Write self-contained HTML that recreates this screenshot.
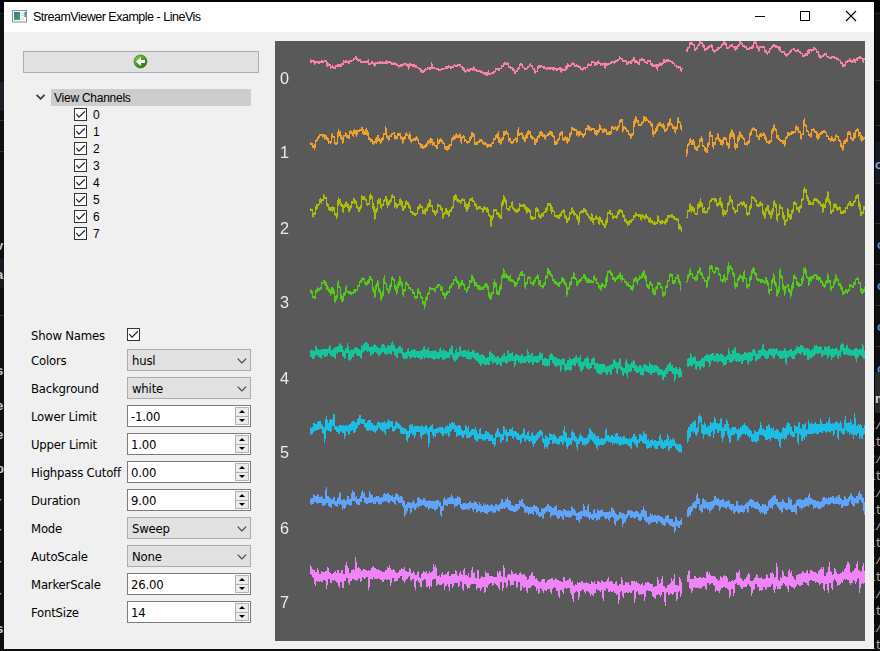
<!DOCTYPE html>
<html>
<head>
<meta charset="utf-8">
<title>StreamViewer Example - LineVis</title>
<style>
html,body{margin:0;padding:0;}
body{width:880px;height:651px;overflow:hidden;background:#0d0f12;position:relative;font-family:"DejaVu Sans Condensed","DejaVu Sans","Liberation Sans",sans-serif;font-size:13px;letter-spacing:-0.2px;color:#000;}
.abs{position:absolute;}
#desk div{position:absolute;}
.frag{font-family:"Liberation Sans",sans-serif;font-size:13px;line-height:16px;color:#c8ccd0;white-space:nowrap;font-weight:bold;}
.mono{font-family:"Liberation Mono",monospace;font-weight:normal;color:#a8a8a8;font-size:13px;}
#win{position:absolute;left:4px;top:2px;width:870px;height:647px;background:#f0f0f0;}
#title{position:absolute;left:0;top:0;width:870px;height:30px;background:#fff;}
#title .txt{position:absolute;left:29px;top:7px;font-family:"Liberation Sans","DejaVu Sans",sans-serif;font-size:12.5px;letter-spacing:-0.49px;line-height:16px;white-space:nowrap;color:#000;}
.lbl{position:absolute;left:27px;white-space:nowrap;line-height:16px;height:16px;}
.combo{position:absolute;left:123px;width:122px;height:20px;background:#e1e1e1;border:1px solid #adadad;}
.combo span{position:absolute;left:4px;top:3px;line-height:16px;white-space:nowrap;}
.combo svg{position:absolute;left:109px;top:8px;}
.spin{position:absolute;left:123px;width:122px;height:20px;background:#fff;border:1px solid #7a7a7a;}
.spin span{position:absolute;left:3px;top:3px;line-height:16px;white-space:nowrap;}
.spin .up,.spin .dn{position:absolute;left:107px;width:12px;height:8px;background:#ececec;border:1px solid #b2b2b2;}
.spin .up{top:1px;} .spin .dn{top:10px;height:7px;}
.tri-up{position:absolute;left:2.5px;top:2px;width:0;height:0;border-left:3px solid transparent;border-right:3px solid transparent;border-bottom:3px solid #000;}
.tri-dn{position:absolute;left:2.5px;top:2px;width:0;height:0;border-left:3px solid transparent;border-right:3px solid transparent;border-top:3px solid #000;}
.cb{position:absolute;width:11px;height:11px;border:1px solid #333;background:#fff;}
.cb svg{position:absolute;left:0;top:0;}
.item{position:absolute;left:89px;white-space:nowrap;line-height:16px;font-family:"Liberation Sans",sans-serif;font-size:12px;letter-spacing:-0.25px;}
#plot{position:absolute;left:271px;top:39px;width:590px;height:600px;background:#595959;overflow:hidden;}
.ch{position:absolute;left:4.5px;font-family:"Liberation Sans",sans-serif;font-size:16.2px;color:#ececec;line-height:18px;opacity:0.999;will-change:transform;}
</style>
</head>
<body>
<div id="desk">
<div style="left:0;top:0;width:880px;height:12px;background:#020408"></div>
<div style="left:0;top:13px;width:880px;height:1px;background:#1f242b"></div>
<div style="left:0;top:82px;width:4px;height:29px;background:#1b2027"></div>
<div style="left:0;top:120px;width:4px;height:1px;background:#2a3038"></div>
<div style="left:0;top:151px;width:4px;height:1px;background:#2a3038"></div>
<div style="left:0;top:315px;width:4px;height:1px;background:#2a3038"></div>
<div style="left:0;top:259px;width:4px;height:29px;background:#161b22"></div>
<div class="frag" style="left:-4px;top:238px">v</div>
<div class="frag" style="left:-4px;top:267px">a</div>
<div class="frag" style="left:-4px;top:331px">l</div>
<div class="frag" style="left:-4px;top:363px">s</div>
<div class="frag" style="left:-4px;top:398px">e</div>
<div class="frag" style="left:-4px;top:427px">e</div>
<div class="frag" style="left:-4px;top:461px">p</div>
<div class="frag" style="left:-4px;top:494px">r</div>
<div class="frag" style="left:-4px;top:524px">r</div>
<div class="frag" style="left:-4px;top:556px">r</div>
<div class="frag" style="left:-4px;top:588px">r</div>
<div class="frag" style="left:-4px;top:621px">s</div>
<div style="left:874px;top:0;width:1px;height:651px;background:#000"></div>
<div style="left:875px;top:80px;width:5px;height:1px;background:#2a3038"></div>
<div style="left:875px;top:125px;width:5px;height:1px;background:#2a3038"></div>
<div style="left:875px;top:183px;width:5px;height:1px;background:#2a3038"></div>
<div style="left:875px;top:223px;width:5px;height:1px;background:#2a3038"></div>
<div style="left:875px;top:264px;width:5px;height:1px;background:#2a3038"></div>
<div style="left:875px;top:305px;width:5px;height:1px;background:#2a3038"></div>
<div style="left:875px;top:346px;width:5px;height:1px;background:#2a3038"></div>
<div style="left:875px;top:142px;width:5px;height:41px;background:#161b22"></div>
<div class="frag" style="left:875px;top:157px;color:#8aa4c8">or</div>
<div class="frag" style="left:877px;top:237px;color:#5b8bd0">o</div>
<div class="frag" style="left:877px;top:278px;color:#5b8bd0">o</div>
<div class="frag" style="left:877px;top:319px;color:#5b8bd0">o</div>
<div class="frag" style="left:877px;top:361px;color:#5b8bd0">o</div>
<div style="left:875px;top:372px;width:5px;height:41px;background:#2b2b2b"></div>
<div class="frag" style="left:875px;top:391px;color:#ddd">m</div>
<div style="left:875px;top:413px;width:5px;height:238px;background:#0c0c0c"></div>
<div class="frag mono" style="left:867.5px;top:418.0px">2/</div>
<div class="frag mono" style="left:867.5px;top:434.9px">at</div>
<div class="frag mono" style="left:867.5px;top:451.8px">2/</div>
<div class="frag mono" style="left:867.5px;top:468.7px">at</div>
<div class="frag mono" style="left:867.5px;top:485.6px">2/</div>
<div class="frag mono" style="left:867.5px;top:502.5px">at</div>
<div class="frag mono" style="left:867.5px;top:519.4px">2/</div>
<div class="frag mono" style="left:867.5px;top:536.3px">at</div>
<div class="frag mono" style="left:867.5px;top:553.2px">2/</div>
<div class="frag mono" style="left:867.5px;top:570.1px">at</div>
<div class="frag mono" style="left:867.5px;top:587.0px">2/</div>
<div class="frag mono" style="left:867.5px;top:603.9px">at</div>
<div class="frag mono" style="left:867.5px;top:620.8px">2/</div>
<div class="frag mono" style="left:867.5px;top:637.7px">at</div>
<div style="left:0;top:650px;width:880px;height:1px;background:#0a0a0a"></div>
</div>
<div id="win">
 <div id="title">
  <svg class="abs" style="left:8px;top:8px" width="16" height="13" viewBox="0 0 16 13">
   <defs><linearGradient id="g1" x1="0" y1="0" x2="0.3" y2="1"><stop offset="0" stop-color="#3b74a8"/><stop offset="1" stop-color="#46a35c"/></linearGradient></defs>
   <rect x="0.5" y="0.5" width="14" height="11.5" fill="#fafafa" stroke="#8a90a0"/>
   <rect x="2" y="2" width="6" height="8" fill="url(#g1)"/>
   <rect x="12.4" y="2" width="1.6" height="5" fill="url(#g1)"/>
   <rect x="9" y="3" width="3" height="1" fill="#d8d8d8"/><rect x="9" y="5" width="3" height="1" fill="#d8d8d8"/><rect x="9" y="7.5" width="3" height="1" fill="#d8d8d8"/><rect x="9" y="9" width="3" height="1" fill="#e2e2e2"/>
  </svg>
  <div class="txt">StreamViewer Example - LineVis</div>
  <svg class="abs" style="left:745px;top:5px" width="120" height="20" viewBox="0 0 120 20" shape-rendering="crispEdges">
   <rect x="6" y="9" width="10" height="1" fill="#000"/>
   <rect x="51.5" y="4.5" width="9" height="9" fill="none" stroke="#000" stroke-width="1"/>
   <g shape-rendering="auto"><path d="M97 4 L107 14 M107 4 L97 14" stroke="#000" stroke-width="1.1" fill="none"/></g>
  </svg>
 </div>

 <!-- back button -->
 <div class="abs" style="left:19px;top:49px;width:234px;height:20px;background:#e1e1e1;border:1px solid #adadad;">
  <svg class="abs" style="left:109px;top:2px" width="15" height="15" viewBox="0 0 15 15">
   <defs><linearGradient id="g2" x1="0.15" y1="0.1" x2="0.8" y2="0.95"><stop offset="0" stop-color="#7cc648"/><stop offset="0.5" stop-color="#4a9a26"/><stop offset="1" stop-color="#2c7610"/></linearGradient></defs>
   <circle cx="7.5" cy="7.5" r="6.5" fill="url(#g2)" stroke="#2f7a18" stroke-width="0.7"/>
   <path d="M2.8 7.5 L7.9 2.9 L7.9 6.1 L12 6.1 L12 8.9 L7.9 8.9 L7.9 12.1 Z" fill="#fff"/>
  </svg>
 </div>

 <!-- tree -->
 <svg class="abs" style="left:32px;top:92px" width="10" height="7" viewBox="0 0 10 7"><path d="M0.6 0.8 L4.6 4.8 L8.6 0.8" fill="none" stroke="#383838" stroke-width="1.8"/></svg>
 <div class="abs" style="left:47px;top:87px;width:200px;height:17px;background:#cdcdcd;"></div>
 <div class="abs item" style="left:50px;top:88px;">View Channels</div>
 <div class="cb" style="left:70px;top:106px"><svg width="11" height="11" viewBox="0 0 11 11"><path d="M1.6 5.4 L4 8.1 L9.5 2.7" fill="none" stroke="#222" stroke-width="1.2" stroke-linecap="round"/></svg></div><div class="item" style="top:105px">0</div>
 <div class="cb" style="left:70px;top:123px"><svg width="11" height="11" viewBox="0 0 11 11"><path d="M1.6 5.4 L4 8.1 L9.5 2.7" fill="none" stroke="#222" stroke-width="1.2" stroke-linecap="round"/></svg></div><div class="item" style="top:122px">1</div>
 <div class="cb" style="left:70px;top:140px"><svg width="11" height="11" viewBox="0 0 11 11"><path d="M1.6 5.4 L4 8.1 L9.5 2.7" fill="none" stroke="#222" stroke-width="1.2" stroke-linecap="round"/></svg></div><div class="item" style="top:139px">2</div>
 <div class="cb" style="left:70px;top:157px"><svg width="11" height="11" viewBox="0 0 11 11"><path d="M1.6 5.4 L4 8.1 L9.5 2.7" fill="none" stroke="#222" stroke-width="1.2" stroke-linecap="round"/></svg></div><div class="item" style="top:156px">3</div>
 <div class="cb" style="left:70px;top:174px"><svg width="11" height="11" viewBox="0 0 11 11"><path d="M1.6 5.4 L4 8.1 L9.5 2.7" fill="none" stroke="#222" stroke-width="1.2" stroke-linecap="round"/></svg></div><div class="item" style="top:173px">4</div>
 <div class="cb" style="left:70px;top:191px"><svg width="11" height="11" viewBox="0 0 11 11"><path d="M1.6 5.4 L4 8.1 L9.5 2.7" fill="none" stroke="#222" stroke-width="1.2" stroke-linecap="round"/></svg></div><div class="item" style="top:190px">5</div>
 <div class="cb" style="left:70px;top:208px"><svg width="11" height="11" viewBox="0 0 11 11"><path d="M1.6 5.4 L4 8.1 L9.5 2.7" fill="none" stroke="#222" stroke-width="1.2" stroke-linecap="round"/></svg></div><div class="item" style="top:207px">6</div>
 <div class="cb" style="left:70px;top:225px"><svg width="11" height="11" viewBox="0 0 11 11"><path d="M1.6 5.4 L4 8.1 L9.5 2.7" fill="none" stroke="#222" stroke-width="1.2" stroke-linecap="round"/></svg></div><div class="item" style="top:224px">7</div>

 <!-- form -->
 <div class="lbl" style="top:326px">Show Names</div>
 <div class="cb" style="left:123px;top:326px"><svg width="11" height="11" viewBox="0 0 11 11"><path d="M1.6 5.4 L4 8.1 L9.5 2.7" fill="none" stroke="#222" stroke-width="1.2" stroke-linecap="round"/></svg></div>
 <div class="lbl" style="top:351px">Colors</div>
 <div class="combo" style="top:347px"><span>husl</span><svg width="10" height="6" viewBox="0 0 10 6"><path d="M0.7 0.7 L4.9 4.9 L9.1 0.7" fill="none" stroke="#404040" stroke-width="1.15"/></svg></div>
 <div class="lbl" style="top:379px">Background</div>
 <div class="combo" style="top:375px"><span>white</span><svg width="10" height="6" viewBox="0 0 10 6"><path d="M0.7 0.7 L4.9 4.9 L9.1 0.7" fill="none" stroke="#404040" stroke-width="1.15"/></svg></div>
 <div class="lbl" style="top:407px">Lower Limit</div>
 <div class="spin" style="top:403px"><span>-1.00</span><div class="up"><div class="tri-up"></div></div><div class="dn"><div class="tri-dn"></div></div></div>
 <div class="lbl" style="top:435px">Upper Limit</div>
 <div class="spin" style="top:431px"><span>1.00</span><div class="up"><div class="tri-up"></div></div><div class="dn"><div class="tri-dn"></div></div></div>
 <div class="lbl" style="top:463px">Highpass Cutoff</div>
 <div class="spin" style="top:459px"><span>0.00</span><div class="up"><div class="tri-up"></div></div><div class="dn"><div class="tri-dn"></div></div></div>
 <div class="lbl" style="top:491px">Duration</div>
 <div class="spin" style="top:487px"><span>9.00</span><div class="up"><div class="tri-up"></div></div><div class="dn"><div class="tri-dn"></div></div></div>
 <div class="lbl" style="top:519px">Mode</div>
 <div class="combo" style="top:515px"><span>Sweep</span><svg width="10" height="6" viewBox="0 0 10 6"><path d="M0.7 0.7 L4.9 4.9 L9.1 0.7" fill="none" stroke="#404040" stroke-width="1.15"/></svg></div>
 <div class="lbl" style="top:547px">AutoScale</div>
 <div class="combo" style="top:543px"><span>None</span><svg width="10" height="6" viewBox="0 0 10 6"><path d="M0.7 0.7 L4.9 4.9 L9.1 0.7" fill="none" stroke="#404040" stroke-width="1.15"/></svg></div>
 <div class="lbl" style="top:575px">MarkerScale</div>
 <div class="spin" style="top:571px"><span>26.00</span><div class="up"><div class="tri-up"></div></div><div class="dn"><div class="tri-dn"></div></div></div>
 <div class="lbl" style="top:603px">FontSize</div>
 <div class="spin" style="top:599px"><span>14</span><div class="up"><div class="tri-up"></div></div><div class="dn"><div class="tri-dn"></div></div></div>

 <div id="plot">
<svg class="abs" style="left:0;top:0" width="590" height="600" viewBox="0 0 590 600" shape-rendering="crispEdges">
<polyline points="35.5,18.1 35.5,21.4 36.5,21.2 36.5,19.9 37.5,19.0 37.5,20.2 38.5,21.6 38.5,20.0 39.5,20.1 39.5,23.8 40.5,21.5 40.5,20.8 41.5,21.2 41.5,22.1 42.5,21.5 42.5,19.9 43.5,20.6 43.5,21.6 44.5,23.0 44.5,21.3 45.5,20.4 45.5,21.4 46.5,20.9 46.5,19.1 47.5,20.1 47.5,21.4 48.5,21.6 48.5,20.4 49.5,19.8 49.5,20.6 50.5,20.4 50.5,19.4 51.5,20.1 51.5,21.7 52.5,26.0 52.5,21.4 53.5,23.4 53.5,24.6 54.5,24.5 54.5,23.4 55.5,24.2 55.5,27.4 56.5,26.6 56.5,25.4 57.5,24.7 57.5,25.9 58.5,27.4 58.5,25.6 59.5,26.6 59.5,27.4 60.5,26.9 60.5,24.4 61.5,24.5 61.5,25.5 62.5,24.8 62.5,23.9 63.5,24.0 63.5,25.4 64.5,25.7 64.5,24.3 65.5,23.1 65.5,24.6 66.5,25.6 66.5,23.6 67.5,22.0 67.5,23.9 68.5,22.7 68.5,19.5 69.5,20.7 69.5,21.6 70.5,21.0 70.5,19.5 71.5,19.8 71.5,20.9 72.5,21.6 72.5,20.5 73.5,21.3 73.5,23.1 74.5,22.0 74.5,20.5 75.5,19.4 75.5,20.6 76.5,20.7 76.5,19.7 77.5,18.9 77.5,20.0 78.5,19.3 78.5,18.4 79.5,16.7 79.5,18.7 80.5,16.9 80.5,15.8 81.5,15.9 81.5,17.5 82.5,20.2 82.5,17.2 83.5,19.4 83.5,20.6 84.5,19.5 84.5,18.7 85.5,19.2 85.5,21.0 86.5,21.8 86.5,20.8 87.5,20.5 87.5,21.4 88.5,22.0 88.5,20.6 89.5,21.2 89.5,21.8 90.5,21.8 90.5,20.8 91.5,20.2 91.5,21.5 92.5,21.7 92.5,20.7 93.5,18.3 93.5,22.6 94.5,24.3 94.5,22.4 95.5,22.2 95.5,23.2 96.5,22.5 96.5,20.6 97.5,20.7 97.5,21.7 98.5,23.9 98.5,21.4 99.5,23.1 99.5,26.0 100.5,23.4 100.5,21.7 101.5,21.3 101.5,22.2 102.5,22.1 102.5,21.2 103.5,21.3 103.5,22.2 104.5,22.0 104.5,20.3 105.5,20.5 105.5,22.7 106.5,22.9 106.5,21.8 107.5,20.7 107.5,22.1 108.5,22.2 108.5,21.2 109.5,21.8 109.5,22.6 110.5,21.9 110.5,20.5 111.5,19.5 111.5,21.4 112.5,22.7 112.5,21.1 113.5,21.0 113.5,22.1 114.5,21.3 114.5,20.2 115.5,20.7 115.5,21.9 116.5,23.5 116.5,21.6 117.5,22.8 117.5,24.0 118.5,23.4 118.5,21.6 119.5,21.2 119.5,23.1 120.5,23.4 120.5,22.6 121.5,22.8 121.5,23.6 122.5,25.0 122.5,23.3 123.5,24.7 123.5,26.2 124.5,25.5 124.5,24.4 125.5,23.8 125.5,25.1 126.5,24.9 126.5,23.7 127.5,23.1 127.5,24.1 128.5,24.0 128.5,22.8 129.5,22.0 129.5,23.1 130.5,22.9 130.5,22.1 131.5,22.6 131.5,24.5 132.5,25.2 132.5,24.1 133.5,23.0 133.5,28.7 134.5,23.7 134.5,22.4 135.5,22.5 135.5,23.8 136.5,24.5 136.5,22.9 137.5,24.1 137.5,25.2 138.5,24.9 138.5,23.2 139.5,23.5 139.5,24.7 140.5,26.4 140.5,24.6 141.5,25.2 141.5,26.7 142.5,27.0 142.5,25.9 143.5,26.6 143.5,27.7 144.5,28.1 144.5,27.4 145.5,27.0 145.5,28.6 146.5,31.8 146.5,28.6 147.5,30.2 147.5,31.1 148.5,31.4 148.5,30.3 149.5,28.7 149.5,30.9 150.5,28.9 150.5,27.9 151.5,28.3 151.5,29.0 152.5,28.3 152.5,27.3 153.5,26.4 153.5,27.3 154.5,28.5 154.5,26.2 155.5,27.0 155.5,28.3 156.5,27.3 156.5,21.5 157.5,25.7 157.5,27.2 158.5,27.6 158.5,26.4 159.5,26.6 159.5,27.2 160.5,28.1 160.5,26.8 161.5,27.8 161.5,28.8 162.5,28.7 162.5,27.4 163.5,27.9 163.5,29.4 164.5,29.5 164.5,28.6 165.5,28.0 165.5,28.9 166.5,28.8 166.5,27.4 167.5,27.4 167.5,28.3 168.5,28.6 168.5,27.3 169.5,27.1 169.5,28.0 170.5,27.4 170.5,25.3 171.5,26.2 171.5,27.0 172.5,27.0 172.5,26.0 173.5,24.3 173.5,26.3 174.5,26.8 174.5,25.2 175.5,25.5 175.5,27.2 176.5,26.9 176.5,25.5 177.5,25.8 177.5,27.1 178.5,26.1 178.5,24.4 179.5,23.7 179.5,24.8 180.5,25.1 180.5,23.9 181.5,24.5 181.5,25.4 182.5,25.0 182.5,23.7 183.5,23.4 183.5,24.6 184.5,24.5 184.5,23.4 185.5,23.5 185.5,25.7 186.5,26.2 186.5,25.1 187.5,25.4 187.5,26.9 188.5,29.6 188.5,26.6 189.5,29.4 189.5,30.3 190.5,31.7 190.5,30.0 191.5,29.4 191.5,30.3 192.5,29.7 192.5,27.3 193.5,29.6 193.5,30.6 194.5,30.3 194.5,29.1 195.5,27.3 195.5,29.4 196.5,27.7 196.5,27.0 197.5,27.4 197.5,29.4 198.5,28.2 198.5,24.9 199.5,27.2 199.5,28.4 200.5,30.3 200.5,28.1 201.5,29.1 201.5,29.9 202.5,30.3 202.5,29.3 203.5,29.8 203.5,30.5 204.5,30.2 204.5,29.2 205.5,29.5 205.5,31.0 206.5,31.6 206.5,30.2 207.5,31.5 207.5,32.2 208.5,33.0 208.5,31.9 209.5,32.1 209.5,33.0 210.5,33.1 210.5,31.7 211.5,31.2 211.5,34.3 212.5,34.7 212.5,33.7 213.5,29.5 213.5,33.8 214.5,33.4 214.5,32.5 215.5,32.2 215.5,33.4 216.5,32.3 216.5,31.3 217.5,31.4 217.5,32.3 218.5,32.2 218.5,31.3 219.5,30.1 219.5,31.5 220.5,30.4 220.5,28.0 221.5,26.9 221.5,28.3 222.5,28.8 222.5,27.6 223.5,27.9 223.5,29.4 224.5,28.8 224.5,27.8 225.5,26.8 225.5,28.2 226.5,27.1 226.5,24.4 227.5,24.8 227.5,25.7 228.5,25.1 228.5,23.7 229.5,21.1 229.5,24.0 230.5,23.1 230.5,21.8 231.5,22.3 231.5,23.5 232.5,23.7 232.5,21.5 233.5,23.4 233.5,26.4 234.5,27.0 234.5,26.1 235.5,25.2 235.5,26.4 236.5,27.8 236.5,26.1 237.5,27.5 237.5,29.6 238.5,28.6 238.5,27.8 239.5,28.3 239.5,33.0 240.5,31.5 240.5,30.6 241.5,29.4 241.5,30.9 242.5,29.7 242.5,28.3 243.5,26.3 243.5,28.6 244.5,26.6 244.5,23.9 245.5,22.5 245.5,23.9 246.5,24.0 246.5,22.8 247.5,23.7 247.5,26.0 248.5,26.9 248.5,25.9 249.5,26.5 249.5,27.7 250.5,28.4 250.5,27.1 251.5,27.4 251.5,28.5 252.5,27.5 252.5,26.5 253.5,24.9 253.5,26.8 254.5,25.2 254.5,24.1 255.5,22.7 255.5,24.4 256.5,25.4 256.5,24.2 257.5,25.1 257.5,27.3 258.5,28.5 258.5,27.0 259.5,28.2 259.5,30.2 260.5,32.6 260.5,29.9 261.5,30.3 261.5,31.0 262.5,30.6 262.5,27.7 263.5,24.6 263.5,28.0 264.5,25.8 264.5,24.5 265.5,24.7 265.5,26.3 266.5,25.5 266.5,24.7 267.5,25.3 267.5,26.7 268.5,27.3 268.5,25.9 269.5,25.7 269.5,27.2 270.5,27.8 270.5,27.0 271.5,27.2 271.5,28.5 272.5,27.9 272.5,27.1 273.5,26.1 273.5,27.3 274.5,28.5 274.5,27.0 275.5,27.0 275.5,28.4 276.5,27.3 276.5,25.8 277.5,26.8 277.5,28.1 278.5,29.4 278.5,28.1 279.5,26.0 279.5,28.7 280.5,28.2 280.5,27.2 281.5,27.8 281.5,28.9 282.5,29.5 282.5,28.3 283.5,27.4 283.5,28.4 284.5,27.8 284.5,26.9 285.5,26.8 285.5,28.1 286.5,32.1 286.5,27.8 287.5,27.9 287.5,28.9 288.5,29.4 288.5,28.3 289.5,28.6 289.5,29.7 290.5,29.6 290.5,28.2 291.5,24.2 291.5,28.4 292.5,25.9 292.5,21.8 293.5,24.6 293.5,25.5 294.5,25.7 294.5,24.2 295.5,24.3 295.5,25.2 296.5,24.4 296.5,23.4 297.5,21.5 297.5,23.7 298.5,23.0 298.5,21.9 299.5,22.7 299.5,25.3 300.5,25.3 300.5,24.6 301.5,23.7 301.5,24.7 302.5,25.7 302.5,24.6 303.5,24.8 303.5,25.9 304.5,26.6 304.5,25.5 305.5,26.3 305.5,27.7 306.5,28.8 306.5,27.3 307.5,28.1 307.5,29.3 308.5,28.1 308.5,27.1 309.5,26.7 309.5,27.7 310.5,28.2 310.5,26.9 311.5,25.8 311.5,27.2 312.5,26.1 312.5,24.5 313.5,22.5 313.5,24.8 314.5,24.1 314.5,23.0 315.5,23.5 315.5,24.3 316.5,23.8 316.5,20.7 317.5,20.1 317.5,20.9 318.5,22.2 318.5,20.6 319.5,21.9 319.5,24.0 320.5,24.0 320.5,22.1 321.5,21.9 321.5,23.4 322.5,22.8 322.5,21.7 323.5,19.5 323.5,22.5 324.5,23.1 324.5,21.7 325.5,22.8 325.5,24.1 326.5,23.8 326.5,22.8 327.5,22.9 327.5,24.2 328.5,23.7 328.5,22.7 329.5,21.7 329.5,23.0 330.5,28.3 330.5,22.5 331.5,23.4 331.5,24.7 332.5,23.9 332.5,22.9 333.5,22.9 333.5,24.1 334.5,23.4 334.5,22.4 335.5,21.6 335.5,22.7 336.5,22.8 336.5,21.7 337.5,19.9 337.5,22.0 338.5,21.2 338.5,20.3 339.5,20.8 339.5,22.3 340.5,21.2 340.5,20.4 341.5,19.1 341.5,20.7 342.5,20.4 342.5,19.3 343.5,17.9 343.5,19.6 344.5,18.2 344.5,15.7 345.5,16.7 345.5,17.4 346.5,18.2 346.5,17.2 347.5,18.0 347.5,20.0 348.5,21.1 348.5,19.7 349.5,19.3 349.5,20.2 350.5,20.2 350.5,19.0 351.5,19.9 351.5,22.9 352.5,23.4 352.5,22.2 353.5,20.6 353.5,22.5 354.5,21.5 354.5,20.5 355.5,20.5 355.5,23.2 356.5,21.6 356.5,20.1 357.5,18.2 357.5,20.4 358.5,18.5 358.5,16.9 359.5,17.1 359.5,22.3 360.5,20.5 360.5,19.6 361.5,19.8 361.5,20.9 362.5,22.8 362.5,20.6 363.5,22.6 363.5,23.8 364.5,22.9 364.5,20.0 365.5,17.7 365.5,20.3 366.5,18.7 366.5,17.5 367.5,18.3 367.5,19.7 368.5,19.5 368.5,18.4 369.5,19.2 369.5,21.0 370.5,22.1 370.5,20.8 371.5,21.4 371.5,22.9 372.5,21.9 372.5,20.8 373.5,18.7 373.5,21.1 374.5,20.0 374.5,19.0 375.5,19.7 375.5,23.0 376.5,24.5 376.5,22.7 377.5,23.0 377.5,23.9 378.5,26.2 378.5,23.6 379.5,24.5 379.5,25.9 380.5,24.8 380.5,24.1 381.5,23.8 381.5,25.1 382.5,29.5 382.5,23.7 383.5,24.1 383.5,25.3 384.5,24.4 384.5,21.9 385.5,22.4 385.5,24.9 386.5,24.5 386.5,23.5 387.5,21.6 387.5,23.8 388.5,21.9 388.5,19.2 389.5,18.9 389.5,20.5 390.5,22.0 390.5,20.2 391.5,18.7 391.5,20.5 392.5,20.7 392.5,18.5 393.5,19.4 393.5,20.9 394.5,20.0 394.5,19.2 395.5,19.5 395.5,20.4 396.5,21.3 396.5,20.3 397.5,20.7 397.5,22.1 398.5,22.8 398.5,21.8 399.5,22.5 399.5,24.5 400.5,25.0 400.5,23.9 401.5,24.7 401.5,25.9 402.5,27.2 402.5,25.6 403.5,26.1 403.5,27.3 404.5,26.6 404.5,25.3 405.5,26.5 405.5,27.7 406.5,30.5 406.5,27.0 407.5,27.6 407.5,28.4" fill="none" stroke="#fb82a0" stroke-width="1.35" stroke-linejoin="bevel"/>
<polyline points="411.5,8.2 411.5,9.5 412.5,11.0 412.5,7.4 413.5,5.7 413.5,7.7 414.5,6.0 414.5,3.3 415.5,0.7 415.5,3.6 416.5,4.0 416.5,1.0 417.5,1.6 417.5,3.0 418.5,4.9 418.5,2.7 419.5,4.6 419.5,8.6 420.5,10.1 420.5,8.3 421.5,6.6 421.5,8.6 422.5,6.9 422.5,4.9 423.5,3.7 423.5,5.2 424.5,4.0 424.5,1.9 425.5,-0.2 425.5,2.2 426.5,2.0 426.5,1.0 427.5,1.7 427.5,3.9 428.5,6.7 428.5,3.6 429.5,6.4 429.5,8.9 430.5,10.1 430.5,8.5 431.5,7.3 431.5,8.8 432.5,7.6 432.5,6.1 433.5,5.9 433.5,7.4 434.5,6.2 434.5,4.4 435.5,4.5 435.5,5.5 436.5,6.4 436.5,3.0 437.5,6.1 437.5,8.3 438.5,10.7 438.5,8.0 439.5,10.1 439.5,11.1 440.5,10.6 440.5,9.2 441.5,9.0 441.5,9.9 442.5,9.3 442.5,7.7 443.5,5.9 443.5,8.0 444.5,7.7 444.5,6.3 445.5,6.0 445.5,7.2 446.5,6.3 446.5,4.1 447.5,2.6 447.5,4.4 448.5,2.9 448.5,1.1 449.5,0.4 449.5,1.8 450.5,4.6 450.5,1.5 451.5,4.3 451.5,7.2 452.5,8.1 452.5,7.0 453.5,6.3 453.5,7.4 454.5,6.5 454.5,5.6 455.5,4.2 455.5,5.9 456.5,4.5 456.5,3.2 457.5,4.2 457.5,5.3 458.5,6.4 458.5,4.9 459.5,6.3 459.5,7.5 460.5,9.6 460.5,7.2 461.5,4.9 461.5,8.4 462.5,5.9 462.5,5.0 463.5,3.5 463.5,5.3 464.5,3.8 464.5,1.0 465.5,0.4 465.5,1.3 466.5,3.5 466.5,1.0 467.5,3.4 467.5,5.2 468.5,5.7 468.5,4.3 469.5,4.9 469.5,5.7 470.5,7.0 470.5,4.7 471.5,6.7 471.5,8.3 472.5,9.2 472.5,7.6 473.5,7.7 473.5,9.1 474.5,8.0 474.5,6.7 475.5,6.8 475.5,7.8 476.5,7.5 476.5,5.8 477.5,4.3 477.5,8.0 478.5,4.6 478.5,2.5 479.5,-0.2 479.5,2.8 480.5,1.7 480.5,0.8 481.5,1.4 481.5,4.7 482.5,8.4 482.5,4.4 483.5,8.1 483.5,10.9 484.5,8.4 484.5,6.6 485.5,5.3 485.5,6.9 486.5,6.5 486.5,5.2 487.5,5.7 487.5,7.0 488.5,6.3 488.5,5.4 489.5,6.0 489.5,9.0 490.5,11.6 490.5,8.7 491.5,10.6 491.5,11.8 492.5,13.7 492.5,11.5 493.5,10.6 493.5,11.8 494.5,10.9 494.5,7.8 495.5,6.9 495.5,8.6 496.5,6.9 496.5,6.1 497.5,4.1 497.5,6.4 498.5,4.4 498.5,3.6 499.5,4.1 499.5,5.7 500.5,6.3 500.5,5.3 501.5,4.6 501.5,5.7 502.5,6.7 502.5,5.2 503.5,6.7 503.5,8.2 504.5,9.4 504.5,5.4 505.5,8.9 505.5,10.5 506.5,11.5 506.5,9.8 507.5,11.2 507.5,11.9 508.5,11.5 508.5,10.1 509.5,10.9 509.5,12.1 510.5,14.5 510.5,11.8 511.5,14.4 511.5,15.2 512.5,14.7 512.5,13.0 513.5,12.3 513.5,13.8 514.5,12.3 514.5,11.4 515.5,9.5 515.5,11.7 516.5,9.8 516.5,8.6 517.5,7.9 517.5,8.7 518.5,8.4 518.5,7.6 519.5,8.1 519.5,9.3 520.5,10.6 520.5,9.1 521.5,9.4 521.5,10.4 522.5,10.1 522.5,8.7 523.5,9.2 523.5,10.3 524.5,11.3 524.5,10.0 525.5,11.2 525.5,12.4 526.5,13.1 526.5,12.1 527.5,12.8 527.5,15.2 528.5,16.2 528.5,15.1 529.5,13.7 529.5,15.4 530.5,14.0 530.5,12.1 531.5,13.2 531.5,14.1 532.5,14.2 532.5,13.0 533.5,8.0 533.5,13.3 534.5,10.9 534.5,9.5 535.5,8.4 535.5,9.8 536.5,10.0 536.5,8.1 537.5,8.5 537.5,9.4 538.5,8.8 538.5,7.6 539.5,6.2 539.5,7.9 540.5,9.0 540.5,7.3 541.5,8.7 541.5,12.0 542.5,11.1 542.5,9.9 543.5,10.8 543.5,13.9 544.5,17.3 544.5,13.6 545.5,16.0 545.5,17.4 546.5,16.6 546.5,15.3 547.5,14.9 547.5,16.2 548.5,15.2 548.5,14.3 549.5,12.4 549.5,14.6 550.5,13.1 550.5,12.0 551.5,12.8 551.5,15.7 552.5,16.3 552.5,15.4 553.5,15.2 553.5,16.3 554.5,17.6 554.5,16.0 555.5,16.6 555.5,17.5 556.5,17.2 556.5,15.4 557.5,15.2 557.5,16.7 558.5,16.3 558.5,15.1 559.5,16.0 559.5,18.0 560.5,17.6 560.5,17.0 561.5,16.6 561.5,17.9 562.5,18.5 562.5,17.2 563.5,17.8 563.5,19.1 564.5,20.0 564.5,18.9 565.5,19.7 565.5,21.8 566.5,22.5 566.5,21.6 567.5,22.2 567.5,24.2 568.5,26.0 568.5,23.9 569.5,23.9 569.5,25.4 570.5,24.2 570.5,21.3 571.5,20.1 571.5,21.6 572.5,21.2 572.5,20.4 573.5,19.3 573.5,20.7 574.5,19.6 574.5,17.6 575.5,18.8 575.5,20.0 576.5,21.9 576.5,19.7 577.5,19.8 577.5,21.1 578.5,20.7 578.5,17.0 579.5,20.3 579.5,21.8 580.5,20.6 580.5,19.2 581.5,17.7 581.5,19.5 582.5,19.5 582.5,16.5 583.5,16.5 583.5,17.3 584.5,16.8 584.5,15.2 585.5,15.6 585.5,16.8 586.5,17.7 586.5,16.5 587.5,17.5 587.5,18.3 588.5,21.7 588.5,17.9 589.5,17.2 589.5,18.3 590.5,18.1 590.5,16.7" fill="none" stroke="#fb82a0" stroke-width="1.35" stroke-linejoin="bevel"/>
<polyline points="35.5,101.0 35.5,102.4 36.5,103.7 36.5,102.1 37.5,103.4 37.5,105.7 38.5,107.2 38.5,105.6 39.5,103.3 39.5,109.2 40.5,103.6 40.5,100.8 41.5,98.2 41.5,101.1 42.5,98.9 42.5,97.6 43.5,95.0 43.5,97.9 44.5,95.0 44.5,93.4 45.5,93.0 45.5,94.7 46.5,94.9 46.5,93.1 47.5,94.6 47.5,96.6 48.5,95.2 48.5,93.5 49.5,93.9 49.5,98.6 50.5,97.1 50.5,94.6 51.5,95.1 51.5,96.5 52.5,100.3 52.5,96.2 53.5,100.0 53.5,102.5 54.5,101.5 54.5,100.5 55.5,101.1 55.5,102.4 56.5,101.4 56.5,95.3 57.5,92.4 57.5,95.6 58.5,96.5 58.5,95.4 59.5,96.2 59.5,101.5 60.5,103.8 60.5,101.2 61.5,101.4 61.5,103.7 62.5,101.7 62.5,96.1 63.5,88.1 63.5,96.4 64.5,92.0 64.5,89.9 65.5,91.7 65.5,94.2 66.5,99.2 66.5,93.9 67.5,98.9 67.5,103.2 68.5,100.4 68.5,95.6 69.5,93.7 69.5,95.9 70.5,94.0 70.5,91.4 71.5,93.7 71.5,96.3 72.5,96.3 72.5,94.9 73.5,94.0 73.5,96.0 74.5,98.2 74.5,92.7 75.5,89.0 75.5,93.0 76.5,91.9 76.5,90.7 77.5,91.6 77.5,93.2 78.5,96.3 78.5,90.9 79.5,87.7 79.5,91.2 80.5,93.9 80.5,89.3 81.5,89.6 81.5,95.7 82.5,91.8 82.5,89.7 83.5,89.6 83.5,90.7 84.5,89.7 84.5,88.0 85.5,88.7 85.5,90.0 86.5,89.0 86.5,86.3 87.5,87.2 87.5,88.7 88.5,94.4 88.5,88.4 89.5,92.7 89.5,94.0 90.5,93.0 90.5,90.2 91.5,86.7 91.5,91.4 92.5,95.0 92.5,89.2 93.5,94.7 93.5,98.3 94.5,98.0 94.5,96.3 95.5,98.0 95.5,99.3 96.5,100.8 96.5,98.6 97.5,99.2 97.5,100.9 98.5,104.1 98.5,100.6 99.5,100.3 99.5,102.7 100.5,100.6 100.5,98.0 101.5,96.6 101.5,102.8 102.5,96.9 102.5,93.8 103.5,95.3 103.5,97.6 104.5,101.3 104.5,97.3 105.5,101.0 105.5,102.8 106.5,101.3 106.5,99.6 107.5,95.7 107.5,99.9 108.5,96.2 108.5,93.3 109.5,92.6 109.5,93.8 110.5,92.9 110.5,84.6 111.5,92.7 111.5,94.2 112.5,98.0 112.5,93.9 113.5,97.7 113.5,100.0 114.5,98.0 114.5,95.9 115.5,93.7 115.5,96.2 116.5,94.6 116.5,92.8 117.5,92.2 117.5,93.3 118.5,92.6 118.5,91.0 119.5,92.3 119.5,94.6 120.5,99.2 120.5,94.3 121.5,96.3 121.5,97.9 122.5,96.6 122.5,93.2 123.5,92.9 123.5,94.3 124.5,93.9 124.5,92.6 125.5,91.9 125.5,95.3 126.5,99.4 126.5,95.0 127.5,99.1 127.5,102.4 128.5,100.1 128.5,98.2 129.5,95.2 129.5,98.6 130.5,95.4 130.5,93.4 131.5,91.5 131.5,93.6 132.5,95.3 132.5,93.3 133.5,94.7 133.5,96.2 134.5,98.6 134.5,90.7 135.5,98.3 135.5,100.1 136.5,101.4 136.5,99.3 137.5,97.8 137.5,99.6 138.5,98.9 138.5,97.0 139.5,98.5 139.5,100.0 140.5,98.8 140.5,96.7 141.5,95.3 141.5,96.9 142.5,100.1 142.5,96.6 143.5,99.8 143.5,102.0 144.5,103.7 144.5,101.8 145.5,103.4 145.5,107.3 146.5,104.9 146.5,102.9 147.5,104.6 147.5,107.2 148.5,108.1 148.5,107.0 149.5,104.0 149.5,107.3 150.5,105.1 150.5,103.5 151.5,102.7 151.5,105.5 152.5,104.4 152.5,102.7 153.5,98.7 153.5,103.0 154.5,100.3 154.5,99.0 155.5,97.1 155.5,103.6 156.5,99.1 156.5,97.2 157.5,98.8 157.5,105.0 158.5,103.0 158.5,101.6 159.5,101.8 159.5,103.9 160.5,105.8 160.5,103.9 161.5,105.5 161.5,107.9 162.5,106.8 162.5,97.4 163.5,101.9 163.5,103.2 164.5,102.2 164.5,100.3 165.5,97.0 165.5,100.6 166.5,99.8 166.5,98.7 167.5,99.5 167.5,101.8 168.5,102.9 168.5,101.6 169.5,102.6 169.5,105.2 170.5,109.2 170.5,104.9 171.5,106.8 171.5,108.4 172.5,109.2 172.5,106.7 173.5,104.4 173.5,108.9 174.5,105.3 174.5,103.1 175.5,103.8 175.5,105.0 176.5,104.1 176.5,99.6 177.5,96.3 177.5,99.9 178.5,97.1 178.5,93.9 179.5,97.1 179.5,98.3 180.5,97.3 180.5,95.6 181.5,92.0 181.5,95.9 182.5,96.1 182.5,93.8 183.5,95.2 183.5,96.3 184.5,96.1 184.5,91.7 185.5,96.0 185.5,97.7 186.5,102.6 186.5,97.6 187.5,95.2 187.5,97.9 188.5,96.1 188.5,94.7 189.5,95.8 189.5,99.9 190.5,99.8 190.5,98.7 191.5,99.5 191.5,100.9 192.5,102.9 192.5,100.6 193.5,100.7 193.5,101.7 194.5,101.0 194.5,99.2 195.5,95.3 195.5,99.5 196.5,95.6 196.5,92.0 197.5,91.9 197.5,94.3 198.5,96.0 198.5,92.3 199.5,95.7 199.5,104.1 200.5,102.4 200.5,101.0 201.5,102.0 201.5,103.5 202.5,103.1 202.5,101.5 203.5,99.8 203.5,101.8 204.5,101.9 204.5,99.3 205.5,98.4 205.5,100.3 206.5,99.8 206.5,98.4 207.5,99.5 207.5,102.7 208.5,103.1 208.5,101.5 209.5,101.6 209.5,103.1 210.5,103.0 210.5,101.4 211.5,102.7 211.5,104.1 212.5,107.3 212.5,103.8 213.5,103.6 213.5,104.9 214.5,106.1 214.5,104.0 215.5,104.1 215.5,105.3 216.5,105.1 216.5,102.6 217.5,101.6 217.5,102.7 218.5,101.9 218.5,97.9 219.5,97.3 219.5,98.7 220.5,97.5 220.5,95.0 221.5,93.3 221.5,95.3 222.5,97.4 222.5,95.0 223.5,90.3 223.5,101.3 224.5,101.7 224.5,95.8 225.5,101.4 225.5,103.6 226.5,101.4 226.5,99.5 227.5,95.8 227.5,99.8 228.5,96.1 228.5,91.5 229.5,90.4 229.5,94.4 230.5,91.8 230.5,90.6 231.5,89.7 231.5,91.7 232.5,93.6 232.5,91.4 233.5,93.3 233.5,100.4 234.5,98.3 234.5,96.8 235.5,98.0 235.5,100.3 236.5,102.6 236.5,100.0 237.5,100.4 237.5,102.6 238.5,100.9 238.5,99.5 239.5,98.3 239.5,99.7 240.5,98.4 240.5,96.7 241.5,97.9 241.5,101.8 242.5,98.2 242.5,93.6 243.5,86.3 243.5,94.6 244.5,94.2 244.5,92.7 245.5,92.2 245.5,93.3 246.5,93.2 246.5,91.9 247.5,92.3 247.5,94.8 248.5,99.0 248.5,94.5 249.5,98.8 249.5,101.1 250.5,99.1 250.5,97.1 251.5,92.3 251.5,97.4 252.5,95.0 252.5,93.2 253.5,89.3 253.5,93.5 254.5,91.1 254.5,89.9 255.5,90.8 255.5,94.4 256.5,97.6 256.5,94.1 257.5,96.6 257.5,98.0 258.5,97.8 258.5,96.7 259.5,97.5 259.5,101.5 260.5,104.3 260.5,101.2 261.5,96.6 261.5,101.7 262.5,98.0 262.5,96.3 263.5,94.7 263.5,96.6 264.5,95.8 264.5,92.9 265.5,90.6 265.5,94.1 266.5,94.1 266.5,90.3 267.5,92.1 267.5,95.6 268.5,95.1 268.5,92.9 269.5,94.3 269.5,95.6 270.5,98.8 270.5,95.3 271.5,94.4 271.5,95.4 272.5,94.6 272.5,93.0 273.5,92.3 273.5,94.4 274.5,92.7 274.5,90.3 275.5,90.1 275.5,91.0 276.5,94.6 276.5,90.5 277.5,93.2 277.5,94.6 278.5,96.6 278.5,94.3 279.5,96.6 279.5,103.2 280.5,103.5 280.5,99.9 281.5,101.5 281.5,103.4 282.5,101.8 282.5,99.3 283.5,97.5 283.5,99.6 284.5,97.8 284.5,95.0 285.5,90.6 285.5,95.3 286.5,91.7 286.5,89.7 287.5,91.4 287.5,97.9 288.5,99.9 288.5,97.6 289.5,96.8 289.5,100.0 290.5,96.9 290.5,95.3 291.5,96.9 291.5,100.4 292.5,103.3 292.5,95.8 293.5,98.4 293.5,100.4 294.5,98.7 294.5,95.6 295.5,90.8 295.5,95.9 296.5,91.1 296.5,86.3 297.5,86.5 297.5,88.4 298.5,89.4 298.5,88.0 299.5,87.5 299.5,89.1 300.5,89.9 300.5,88.2 301.5,89.6 301.5,94.3 302.5,92.9 302.5,91.3 303.5,90.4 303.5,96.3 304.5,91.7 304.5,90.2 305.5,91.3 305.5,92.4 306.5,93.7 306.5,92.2 307.5,93.4 307.5,95.7 308.5,96.1 308.5,94.3 309.5,92.1 309.5,94.6 310.5,92.4 310.5,88.5 311.5,87.2 311.5,89.3 312.5,87.5 312.5,84.8 313.5,84.3 313.5,85.9 314.5,90.2 314.5,85.6 315.5,88.1 315.5,89.9 316.5,89.7 316.5,87.8 317.5,87.0 317.5,88.9 318.5,88.7 318.5,87.4 319.5,88.4 319.5,90.7 320.5,93.5 320.5,89.4 321.5,89.1 321.5,94.9 322.5,93.0 322.5,91.5 323.5,87.8 323.5,92.0 324.5,88.1 324.5,83.6 325.5,86.2 325.5,88.0 326.5,88.9 326.5,87.7 327.5,88.4 327.5,92.2 328.5,90.1 328.5,88.5 329.5,87.6 329.5,89.9 330.5,90.2 330.5,87.9 331.5,89.9 331.5,92.4 332.5,93.9 332.5,92.1 333.5,91.2 333.5,94.1 334.5,92.7 334.5,91.0 335.5,90.9 335.5,94.1 336.5,91.2 336.5,86.1 337.5,84.9 337.5,86.3 338.5,88.9 338.5,86.0 339.5,87.1 339.5,88.3 340.5,87.2 340.5,85.7 341.5,86.9 341.5,90.2 342.5,89.2 342.5,87.2 343.5,83.7 343.5,87.5 344.5,84.3 344.5,81.1 345.5,77.9 345.5,81.4 346.5,80.3 346.5,77.7 347.5,80.0 347.5,91.5 348.5,86.5 348.5,85.0 349.5,85.7 349.5,87.3 350.5,88.4 350.5,86.2 351.5,88.1 351.5,90.1 352.5,90.7 352.5,88.7 353.5,90.4 353.5,93.2 354.5,94.6 354.5,92.9 355.5,93.3 355.5,97.3 356.5,95.9 356.5,94.1 357.5,91.7 357.5,94.4 358.5,92.0 358.5,85.2 359.5,77.6 359.5,85.5 360.5,77.9 360.5,74.9 361.5,77.6 361.5,80.4 362.5,81.4 362.5,79.5 363.5,79.4 363.5,83.5 364.5,85.3 364.5,83.2 365.5,83.8 365.5,85.1 366.5,84.3 366.5,82.9 367.5,80.0 367.5,83.2 368.5,80.3 368.5,75.7 369.5,75.0 369.5,76.9 370.5,80.7 370.5,76.6 371.5,77.2 371.5,78.9 372.5,79.8 372.5,78.7 373.5,79.5 373.5,81.1 374.5,81.9 374.5,80.4 375.5,81.1 375.5,82.7 376.5,85.8 376.5,82.4 377.5,83.1 377.5,89.6 378.5,95.6 378.5,89.3 379.5,91.0 379.5,92.8 380.5,92.1 380.5,90.6 381.5,85.4 381.5,91.0 382.5,87.2 382.5,85.3 383.5,81.7 383.5,85.6 384.5,83.9 384.5,81.4 385.5,81.7 385.5,83.1 386.5,86.2 386.5,82.8 387.5,83.8 387.5,85.4 388.5,87.6 388.5,82.4 389.5,87.5 389.5,89.7 390.5,91.3 390.5,89.4 391.5,87.2 391.5,89.7 392.5,87.6 392.5,85.4 393.5,80.8 393.5,85.7 394.5,82.0 394.5,80.8 395.5,77.5 395.5,82.2 396.5,85.1 396.5,81.9 397.5,84.6 397.5,87.2 398.5,86.8 398.5,85.2 399.5,86.5 399.5,88.6 400.5,92.7 400.5,88.3 401.5,84.8 401.5,88.6 402.5,85.1 402.5,80.4 403.5,75.9 403.5,80.7 404.5,82.1 404.5,80.4 405.5,81.8 405.5,84.4 406.5,90.0 406.5,84.1" fill="none" stroke="#eca030" stroke-width="1.35" stroke-linejoin="bevel"/>
<polyline points="411.5,108.3 411.5,115.8 412.5,108.6 412.5,104.8 413.5,102.6 413.5,105.1 414.5,102.9 414.5,98.8 415.5,97.2 415.5,99.0 416.5,103.7 416.5,98.7 417.5,100.7 417.5,103.0 418.5,103.7 418.5,98.5 419.5,103.4 419.5,105.8 420.5,108.7 420.5,105.5 421.5,108.1 421.5,109.7 422.5,108.7 422.5,106.5 423.5,104.1 423.5,106.8 424.5,104.4 424.5,99.6 425.5,97.3 425.5,99.9 426.5,101.0 426.5,95.1 427.5,100.7 427.5,104.6 428.5,106.0 428.5,104.4 429.5,105.8 429.5,107.6 430.5,110.9 430.5,105.9 431.5,110.4 431.5,111.7 432.5,110.7 432.5,105.5 433.5,101.2 433.5,105.8 434.5,101.5 434.5,95.0 435.5,89.8 435.5,95.3 436.5,95.6 436.5,94.3 437.5,95.3 437.5,102.2 438.5,108.0 438.5,101.0 439.5,102.7 439.5,103.9 440.5,103.0 440.5,98.7 441.5,96.0 441.5,99.0 442.5,96.3 442.5,92.3 443.5,95.6 443.5,96.9 444.5,101.1 444.5,96.6 445.5,100.8 445.5,102.8 446.5,103.6 446.5,101.6 447.5,98.6 447.5,105.4 448.5,99.0 448.5,97.2 449.5,96.9 449.5,99.0 450.5,98.3 450.5,96.3 451.5,98.0 451.5,101.2 452.5,104.8 452.5,100.9 453.5,104.5 453.5,107.6 454.5,104.8 454.5,98.1 455.5,91.4 455.5,98.4 456.5,91.7 456.5,88.0 457.5,90.3 457.5,92.0 458.5,98.0 458.5,91.4 459.5,97.7 459.5,102.9 460.5,108.7 460.5,102.6 461.5,104.9 461.5,107.0 462.5,105.2 462.5,100.8 463.5,93.9 463.5,101.1 464.5,94.2 464.5,90.2 465.5,92.7 465.5,93.9 466.5,97.2 466.5,93.6 467.5,94.8 467.5,96.2 468.5,99.1 468.5,95.9 469.5,98.8 469.5,102.6 470.5,104.3 470.5,102.5 471.5,101.7 471.5,103.5 472.5,104.3 472.5,102.2 473.5,99.2 473.5,102.9 474.5,99.5 474.5,94.9 475.5,90.2 475.5,95.2 476.5,91.6 476.5,89.3 477.5,87.6 477.5,89.7 478.5,88.0 478.5,86.7 479.5,87.6 479.5,88.6 480.5,89.6 480.5,88.3 481.5,89.3 481.5,95.6 482.5,96.0 482.5,94.7 483.5,95.7 483.5,98.9 484.5,98.7 484.5,95.8 485.5,91.7 485.5,96.1 486.5,95.0 486.5,92.7 487.5,93.3 487.5,94.8 488.5,93.6 488.5,91.6 489.5,93.4 489.5,94.5 490.5,99.7 490.5,94.2 491.5,99.4 491.5,101.7 492.5,101.6 492.5,100.3 493.5,100.2 493.5,101.7 494.5,102.6 494.5,101.1 495.5,98.7 495.5,101.4 496.5,99.0 496.5,92.6 497.5,87.5 497.5,92.9 498.5,87.7 498.5,86.1 499.5,83.5 499.5,87.6 500.5,89.9 500.5,87.3 501.5,89.6 501.5,94.6 502.5,97.5 502.5,94.3 503.5,95.1 503.5,97.3 504.5,99.8 504.5,97.0 505.5,99.5 505.5,101.2 506.5,100.3 506.5,98.8 507.5,99.8 507.5,101.9 508.5,101.9 508.5,100.4 509.5,99.0 509.5,106.0 510.5,99.5 510.5,97.7 511.5,94.9 511.5,98.0 512.5,95.2 512.5,92.1 513.5,92.1 513.5,94.1 514.5,94.6 514.5,92.8 515.5,91.4 515.5,93.1 516.5,93.1 516.5,91.2 517.5,90.7 517.5,92.8 518.5,91.7 518.5,90.6 519.5,90.3 519.5,91.6 520.5,90.6 520.5,85.5 521.5,84.6 521.5,86.0 522.5,89.8 522.5,85.7 523.5,88.3 523.5,90.3 524.5,92.1 524.5,90.0 525.5,91.8 525.5,94.3 526.5,99.2 526.5,94.0 527.5,92.1 527.5,94.3 528.5,92.4 528.5,83.3 529.5,77.3 529.5,83.6 530.5,86.1 530.5,83.3 531.5,85.8 531.5,90.0 532.5,90.7 532.5,89.7 533.5,90.4 533.5,94.6 534.5,95.0 534.5,93.6 535.5,92.7 535.5,97.1 536.5,93.0 536.5,88.4 537.5,88.1 537.5,89.5 538.5,89.2 538.5,87.7 539.5,88.9 539.5,90.7 540.5,91.9 540.5,90.4 541.5,90.2 541.5,91.8 542.5,99.4 542.5,91.5 543.5,95.4 543.5,97.7 544.5,95.7 544.5,93.0 545.5,91.4 545.5,93.0 546.5,93.6 546.5,91.8 547.5,89.9 547.5,92.2 548.5,91.5 548.5,89.5 549.5,89.6 549.5,91.2 550.5,92.2 550.5,90.7 551.5,91.9 551.5,94.8 552.5,96.1 552.5,94.6 553.5,96.1 553.5,97.9 554.5,98.9 554.5,97.5 555.5,98.0 555.5,101.1 556.5,98.3 556.5,95.7 557.5,96.7 557.5,98.5 558.5,100.8 558.5,98.2 559.5,98.1 559.5,100.3 560.5,98.4 560.5,94.5 561.5,93.7 561.5,95.2 562.5,96.8 562.5,94.9 563.5,96.5 563.5,98.2 564.5,100.6 564.5,97.9 565.5,100.3 565.5,102.6 566.5,107.0 566.5,102.3 567.5,106.7 567.5,109.8 568.5,107.0 568.5,101.6 569.5,99.3 569.5,102.2 570.5,102.4 570.5,101.2 571.5,97.3 571.5,101.3 572.5,98.8 572.5,93.6 573.5,89.8 573.5,93.9 574.5,92.3 574.5,90.6 575.5,92.0 575.5,96.3 576.5,98.7 576.5,96.0 577.5,98.2 577.5,99.7 578.5,98.5 578.5,94.3 579.5,91.0 579.5,98.1 580.5,95.8 580.5,90.1 581.5,88.6 581.5,90.4 582.5,89.1 582.5,87.6 583.5,88.8 583.5,95.8 584.5,92.5 584.5,91.0 585.5,92.2 585.5,94.3 586.5,100.6 586.5,94.0 587.5,97.6 587.5,99.2 588.5,98.5 588.5,96.8 589.5,96.8 589.5,97.7 590.5,97.1 590.5,94.0" fill="none" stroke="#eca030" stroke-width="1.35" stroke-linejoin="bevel"/>
<polyline points="35.5,167.3 35.5,168.2 36.5,170.3 36.5,167.9 37.5,170.0 37.5,174.9 38.5,176.6 38.5,174.0 39.5,171.5 39.5,174.3 40.5,171.8 40.5,168.5 41.5,163.3 41.5,168.8 42.5,165.8 42.5,164.4 43.5,163.1 43.5,164.5 44.5,163.4 44.5,158.4 45.5,157.8 45.5,160.1 46.5,162.5 46.5,159.8 47.5,157.7 47.5,160.3 48.5,158.0 48.5,153.7 49.5,155.2 49.5,156.8 50.5,158.1 50.5,155.8 51.5,157.8 51.5,162.7 52.5,165.7 52.5,162.4 53.5,165.0 53.5,166.4 54.5,169.4 54.5,166.1 55.5,167.7 55.5,169.2 56.5,168.8 56.5,166.6 57.5,165.4 57.5,170.7 58.5,167.5 58.5,166.2 59.5,167.2 59.5,172.4 60.5,175.0 60.5,172.1 61.5,173.0 61.5,177.7 62.5,173.3 62.5,164.6 63.5,156.3 63.5,164.9 64.5,159.4 64.5,157.9 65.5,159.1 65.5,162.7 66.5,165.9 66.5,162.4 67.5,165.6 67.5,169.9 68.5,171.4 68.5,166.8 69.5,163.3 69.5,167.1 70.5,163.5 70.5,162.2 71.5,160.2 71.5,162.5 72.5,166.8 72.5,161.7 73.5,166.5 73.5,169.1 74.5,171.1 74.5,168.2 75.5,164.1 75.5,168.5 76.5,164.4 76.5,162.6 77.5,159.7 77.5,162.9 78.5,160.0 78.5,157.4 79.5,157.7 79.5,161.8 80.5,162.3 80.5,159.6 81.5,162.0 81.5,164.9 82.5,168.3 82.5,164.6 83.5,168.0 83.5,170.9 84.5,170.0 84.5,168.4 85.5,164.5 85.5,168.7 86.5,164.8 86.5,154.1 87.5,157.7 87.5,159.2 88.5,157.8 88.5,155.1 89.5,156.6 89.5,157.8 90.5,159.3 90.5,157.5 91.5,159.0 91.5,162.8 92.5,164.9 92.5,162.5 93.5,162.2 93.5,163.7 94.5,162.5 94.5,158.2 95.5,152.3 95.5,158.5 96.5,156.0 96.5,154.5 97.5,155.7 97.5,162.7 98.5,170.6 98.5,162.4 99.5,170.3 99.5,179.2 100.5,175.1 100.5,171.4 101.5,167.2 101.5,171.7 102.5,167.5 102.5,161.6 103.5,157.5 103.5,161.9 104.5,162.9 104.5,160.8 105.5,157.0 105.5,164.2 106.5,167.6 106.5,163.9 107.5,163.6 107.5,165.0 108.5,163.9 108.5,160.9 109.5,158.4 109.5,161.2 110.5,158.7 110.5,154.7 111.5,157.0 111.5,158.5 112.5,166.9 112.5,158.2 113.5,162.9 113.5,164.4 114.5,163.0 114.5,161.4 115.5,157.9 115.5,161.7 116.5,158.2 116.5,154.2 117.5,154.0 117.5,155.1 118.5,157.2 118.5,154.8 119.5,156.9 119.5,166.8 120.5,163.0 120.5,161.7 121.5,162.7 121.5,167.7 122.5,166.4 122.5,164.7 123.5,162.7 123.5,165.0 124.5,163.0 124.5,158.8 125.5,157.6 125.5,159.0 126.5,165.9 126.5,158.7 127.5,162.1 127.5,168.3 128.5,169.8 128.5,168.0 129.5,164.3 129.5,168.3 130.5,164.6 130.5,161.3 131.5,159.6 131.5,162.3 132.5,163.9 132.5,162.0 133.5,161.9 133.5,163.5 134.5,168.1 134.5,163.2 135.5,167.8 135.5,171.6 136.5,171.3 136.5,169.8 137.5,171.0 137.5,172.9 138.5,173.6 138.5,171.7 139.5,172.7 139.5,174.1 140.5,174.9 140.5,173.5 141.5,171.7 141.5,173.5 142.5,172.0 142.5,168.3 143.5,165.3 143.5,168.6 144.5,165.3 144.5,163.5 145.5,164.0 145.5,165.9 146.5,166.7 146.5,165.1 147.5,166.4 147.5,171.2 148.5,173.3 148.5,170.4 149.5,168.1 149.5,170.7 150.5,174.2 150.5,168.6 151.5,166.5 151.5,170.5 152.5,168.8 152.5,167.0 153.5,161.8 153.5,167.3 154.5,162.1 154.5,158.4 155.5,161.8 155.5,164.0 156.5,166.1 156.5,163.7 157.5,165.8 157.5,170.1 158.5,171.7 158.5,169.8 159.5,170.2 159.5,172.7 160.5,174.5 160.5,172.4 161.5,169.0 161.5,172.7 162.5,169.3 162.5,164.1 163.5,163.3 163.5,165.4 164.5,165.8 164.5,164.7 165.5,164.4 165.5,166.7 166.5,169.6 166.5,166.4 167.5,169.3 167.5,177.8 168.5,175.6 168.5,174.0 169.5,171.2 169.5,174.3 170.5,171.5 170.5,167.7 171.5,167.1 171.5,169.2 172.5,173.9 172.5,168.9 173.5,173.7 173.5,175.4 174.5,174.0 174.5,170.8 175.5,168.4 175.5,171.1 176.5,169.0 176.5,167.6 177.5,164.8 177.5,167.9 178.5,165.1 178.5,159.1 179.5,154.0 179.5,159.4 180.5,157.1 180.5,153.5 181.5,155.4 181.5,157.6 182.5,160.9 182.5,157.3 183.5,159.9 183.5,161.3 184.5,160.6 184.5,158.9 185.5,160.2 185.5,162.4 186.5,160.9 186.5,159.0 187.5,157.4 187.5,159.2 188.5,159.8 188.5,157.9 189.5,159.5 189.5,161.7 190.5,167.5 190.5,161.4 191.5,167.2 191.5,170.7 192.5,168.9 192.5,167.2 193.5,161.5 193.5,167.5 194.5,161.8 194.5,159.1 195.5,157.3 195.5,159.3 196.5,160.2 196.5,158.5 197.5,156.2 197.5,159.5 198.5,161.3 198.5,159.2 199.5,160.8 199.5,162.4 200.5,165.9 200.5,162.1 201.5,165.6 201.5,168.8 202.5,168.3 202.5,166.7 203.5,165.5 203.5,167.1 204.5,167.5 204.5,166.2 205.5,165.2 205.5,167.6 206.5,168.2 206.5,167.0 207.5,167.9 207.5,171.4 208.5,169.8 208.5,168.3 209.5,164.9 209.5,168.6 210.5,168.3 210.5,166.3 211.5,168.0 211.5,169.9 212.5,171.3 212.5,166.5 213.5,171.0 213.5,173.7 214.5,176.0 214.5,173.4 215.5,175.7 215.5,183.0 216.5,185.9 216.5,178.6 217.5,173.6 217.5,178.9 218.5,173.9 218.5,170.0 219.5,167.9 219.5,170.3 220.5,169.2 220.5,168.1 221.5,168.9 221.5,174.0 222.5,172.4 222.5,171.0 223.5,171.5 223.5,172.8 224.5,177.1 224.5,172.5 225.5,176.8 225.5,177.7 226.5,177.1 226.5,165.7 227.5,158.7 227.5,166.0 228.5,159.0 228.5,154.6 229.5,156.7 229.5,157.8 230.5,162.7 230.5,157.5 231.5,162.4 231.5,167.1 232.5,168.4 232.5,167.1 233.5,168.3 233.5,170.1 234.5,168.4 234.5,166.5 235.5,165.1 235.5,166.5 236.5,165.4 236.5,162.9 237.5,160.0 237.5,166.1 238.5,169.3 238.5,165.8 239.5,168.8 239.5,169.9 240.5,170.9 240.5,168.2 241.5,169.7 241.5,171.2 242.5,171.3 242.5,170.4 243.5,166.9 243.5,170.7 244.5,167.2 244.5,162.3 245.5,163.8 245.5,165.6 246.5,166.0 246.5,165.1 247.5,163.4 247.5,165.4 248.5,164.9 248.5,163.4 249.5,163.3 249.5,164.2 250.5,169.7 250.5,163.9 251.5,169.4 251.5,172.4 252.5,169.7 252.5,166.9 253.5,167.4 253.5,169.0 254.5,171.5 254.5,168.3 255.5,171.2 255.5,175.2 256.5,178.7 256.5,174.9 257.5,176.1 257.5,177.4 258.5,178.9 258.5,177.1 259.5,176.4 259.5,178.2 260.5,176.7 260.5,171.0 261.5,165.9 261.5,171.3 262.5,169.0 262.5,167.6 263.5,168.7 263.5,174.0 264.5,176.5 264.5,173.7 265.5,174.8 265.5,178.0 266.5,175.4 266.5,172.6 267.5,172.8 267.5,173.8 268.5,175.9 268.5,171.7 269.5,170.4 269.5,172.0 270.5,171.6 270.5,170.6 271.5,166.1 271.5,170.9 272.5,166.8 272.5,162.7 273.5,162.6 273.5,165.0 274.5,163.1 274.5,161.8 275.5,162.8 275.5,164.7 276.5,172.6 276.5,164.4 277.5,168.2 277.5,169.6 278.5,171.3 278.5,169.3 279.5,171.0 279.5,174.5 280.5,176.2 280.5,174.2 281.5,174.2 281.5,176.3 282.5,176.2 282.5,174.3 283.5,175.2 283.5,177.6 284.5,176.6 284.5,175.1 285.5,172.6 285.5,175.4 286.5,173.4 286.5,171.6 287.5,169.5 287.5,171.9 288.5,170.6 288.5,168.6 289.5,170.3 289.5,174.4 290.5,178.1 290.5,174.1 291.5,177.8 291.5,180.4 292.5,181.8 292.5,179.8 293.5,175.9 293.5,180.1 294.5,176.2 294.5,171.7 295.5,171.9 295.5,173.4 296.5,172.2 296.5,169.0 297.5,166.2 297.5,169.3 298.5,173.6 298.5,168.6 299.5,172.5 299.5,173.9 300.5,173.8 300.5,172.8 301.5,173.6 301.5,174.9 302.5,179.5 302.5,174.6 303.5,175.8 303.5,184.4 304.5,176.1 304.5,172.9 305.5,170.4 305.5,173.2 306.5,170.6 306.5,169.1 307.5,170.3 307.5,172.0 308.5,170.6 308.5,167.8 309.5,167.6 309.5,168.8 310.5,171.6 310.5,168.5 311.5,171.5 311.5,172.7 312.5,174.7 312.5,172.4 313.5,174.0 313.5,176.1 314.5,177.3 314.5,175.4 315.5,176.7 315.5,178.6 316.5,180.3 316.5,172.0 317.5,175.5 317.5,177.8 318.5,183.5 318.5,177.2 319.5,177.4 319.5,179.0 320.5,177.7 320.5,175.9 321.5,174.7 321.5,176.3 322.5,178.4 322.5,176.0 323.5,178.1 323.5,179.3 324.5,184.3 324.5,175.4 325.5,176.6 325.5,178.4 326.5,181.4 326.5,178.1 327.5,181.1 327.5,182.8 328.5,184.5 328.5,182.5 329.5,184.2 329.5,186.3 330.5,186.3 330.5,183.6 331.5,176.9 331.5,183.9 332.5,177.2 332.5,172.6 333.5,171.3 333.5,173.2 334.5,171.6 334.5,168.7 335.5,170.9 335.5,172.4 336.5,173.9 336.5,172.1 337.5,173.6 337.5,177.2 338.5,177.2 338.5,175.5 339.5,174.7 339.5,176.1 340.5,176.6 340.5,175.7 341.5,174.8 341.5,177.5 342.5,175.0 342.5,173.3 343.5,168.9 343.5,173.6 344.5,171.2 344.5,168.2 345.5,169.0 345.5,170.3 346.5,171.6 346.5,169.8 347.5,169.5 347.5,173.2 348.5,176.8 348.5,172.9 349.5,176.5 349.5,180.5 350.5,180.3 350.5,179.2 351.5,178.6 351.5,180.7 352.5,184.6 352.5,180.3 353.5,181.0 353.5,183.0 354.5,182.9 354.5,179.2 355.5,179.8 355.5,181.7 356.5,180.9 356.5,179.4 357.5,177.8 357.5,179.7 358.5,178.1 358.5,175.1 359.5,174.9 359.5,176.3 360.5,175.4 360.5,171.1 361.5,172.9 361.5,173.8 362.5,174.3 362.5,173.1 363.5,173.4 363.5,175.3 364.5,175.1 364.5,173.1 365.5,174.5 365.5,175.7 366.5,180.1 366.5,174.8 367.5,173.3 367.5,175.3 368.5,177.3 368.5,174.4 369.5,176.5 369.5,178.3 370.5,176.8 370.5,173.8 371.5,174.2 371.5,175.7 372.5,177.6 372.5,175.6 373.5,177.6 373.5,178.9 374.5,181.4 374.5,178.2 375.5,176.4 375.5,181.5 376.5,181.4 376.5,179.9 377.5,179.5 377.5,182.7 378.5,183.2 378.5,181.5 379.5,180.5 379.5,183.0 380.5,183.5 380.5,182.0 381.5,181.4 381.5,182.5 382.5,181.7 382.5,173.6 383.5,177.4 383.5,179.3 384.5,182.1 384.5,179.0 385.5,182.1 385.5,183.3 386.5,182.4 386.5,179.5 387.5,180.1 387.5,182.2 388.5,181.4 388.5,180.4 389.5,180.4 389.5,182.4 390.5,183.3 390.5,181.7 391.5,177.0 391.5,182.0 392.5,177.3 392.5,175.1 393.5,174.8 393.5,176.5 394.5,176.5 394.5,174.4 395.5,174.1 395.5,175.2 396.5,176.8 396.5,173.0 397.5,174.5 397.5,176.0 398.5,177.3 398.5,175.6 399.5,176.3 399.5,178.8 400.5,178.8 400.5,176.9 401.5,177.7 401.5,179.6 402.5,178.7 402.5,177.6 403.5,178.4 403.5,185.4 404.5,188.6 404.5,183.8 405.5,184.5 405.5,185.9 406.5,191.0 406.5,185.6" fill="none" stroke="#acba0c" stroke-width="1.35" stroke-linejoin="bevel"/>
<polyline points="411.5,175.7 411.5,177.2 412.5,176.0 412.5,170.0 413.5,169.2 413.5,171.2 414.5,169.5 414.5,166.0 415.5,162.5 415.5,166.3 416.5,172.2 416.5,165.7 417.5,164.9 417.5,166.5 418.5,170.7 418.5,166.2 419.5,170.4 419.5,172.6 420.5,173.2 420.5,171.9 421.5,172.6 421.5,174.0 422.5,172.9 422.5,167.6 423.5,161.8 423.5,167.9 424.5,165.9 424.5,164.7 425.5,157.5 425.5,165.0 426.5,164.9 426.5,161.0 427.5,164.6 427.5,170.6 428.5,171.7 428.5,170.1 429.5,166.1 429.5,171.7 430.5,172.3 430.5,170.4 431.5,170.4 431.5,171.6 432.5,170.9 432.5,168.7 433.5,165.9 433.5,169.0 434.5,166.2 434.5,160.4 435.5,159.7 435.5,161.1 436.5,160.3 436.5,157.5 437.5,157.3 437.5,158.7 438.5,158.9 438.5,157.4 439.5,157.9 439.5,161.3 440.5,159.1 440.5,157.3 441.5,158.8 441.5,162.8 442.5,165.5 442.5,162.5 443.5,161.5 443.5,164.8 444.5,161.8 444.5,157.9 445.5,156.6 445.5,160.0 446.5,167.3 446.5,159.7 447.5,167.1 447.5,168.4 448.5,176.4 448.5,168.1 449.5,171.5 449.5,172.6 450.5,174.1 450.5,172.2 451.5,168.8 451.5,172.5 452.5,169.1 452.5,164.7 453.5,160.9 453.5,165.0 454.5,161.2 454.5,157.6 455.5,154.2 455.5,157.9 456.5,162.3 456.5,157.6 457.5,162.0 457.5,166.5 458.5,168.5 458.5,166.2 459.5,168.2 459.5,171.5 460.5,172.4 460.5,170.9 461.5,168.8 461.5,171.2 462.5,169.1 462.5,164.8 463.5,162.8 463.5,164.9 464.5,164.1 464.5,162.5 465.5,161.6 465.5,162.7 466.5,163.1 466.5,161.7 467.5,161.2 467.5,164.9 468.5,161.8 468.5,160.5 469.5,161.7 469.5,163.4 470.5,166.9 470.5,163.1 471.5,164.6 471.5,171.2 472.5,174.5 472.5,170.9 473.5,172.6 473.5,173.6 474.5,172.9 474.5,168.3 475.5,162.9 475.5,168.6 476.5,163.2 476.5,156.4 477.5,155.3 477.5,156.4 478.5,158.2 478.5,156.2 479.5,157.1 479.5,158.6 480.5,160.5 480.5,158.3 481.5,160.2 481.5,163.7 482.5,165.4 482.5,163.4 483.5,163.8 483.5,165.3 484.5,165.8 484.5,164.8 485.5,159.7 485.5,165.1 486.5,163.5 486.5,162.6 487.5,163.2 487.5,169.1 488.5,174.5 488.5,168.8 489.5,174.2 489.5,178.2 490.5,174.5 490.5,171.0 491.5,166.1 491.5,171.3 492.5,166.4 492.5,163.8 493.5,166.1 493.5,169.4 494.5,174.0 494.5,169.1 495.5,173.7 495.5,177.7 496.5,175.0 496.5,173.2 497.5,166.7 497.5,173.5 498.5,167.0 498.5,161.3 499.5,159.6 499.5,161.9 500.5,166.8 500.5,161.6 501.5,166.5 501.5,174.8 502.5,181.0 502.5,174.5 503.5,172.2 503.5,174.8 504.5,172.5 504.5,163.5 505.5,165.0 505.5,166.8 506.5,167.5 506.5,166.1 507.5,167.2 507.5,171.6 508.5,178.9 508.5,171.3 509.5,178.6 509.5,185.2 510.5,182.8 510.5,180.6 511.5,178.3 511.5,180.9 512.5,178.6 512.5,166.8 513.5,171.3 513.5,173.9 514.5,177.5 514.5,173.6 515.5,173.6 515.5,179.3 516.5,174.2 516.5,172.9 517.5,167.7 517.5,173.2 518.5,168.0 518.5,162.8 519.5,160.4 519.5,163.1 520.5,163.2 520.5,161.6 521.5,163.1 521.5,169.0 522.5,168.0 522.5,166.2 523.5,167.7 523.5,169.6 524.5,171.7 524.5,167.6 525.5,163.8 525.5,167.9 526.5,164.1 526.5,159.2 527.5,157.0 527.5,159.5 528.5,157.3 528.5,151.6 529.5,146.3 529.5,151.9 530.5,150.4 530.5,149.0 531.5,148.3 531.5,154.3 532.5,159.5 532.5,154.0 533.5,159.2 533.5,163.5 534.5,162.7 534.5,159.3 535.5,161.2 535.5,163.0 536.5,163.8 536.5,162.5 537.5,161.8 537.5,164.0 538.5,162.1 538.5,159.2 539.5,157.2 539.5,159.6 540.5,159.4 540.5,157.6 541.5,158.3 541.5,159.5 542.5,161.2 542.5,158.6 543.5,160.5 543.5,162.4 544.5,162.1 544.5,160.6 545.5,161.8 545.5,163.6 546.5,166.0 546.5,163.3 547.5,164.0 547.5,171.9 548.5,168.0 548.5,162.6 549.5,165.4 549.5,166.9 550.5,165.7 550.5,161.4 551.5,156.4 551.5,161.7 552.5,156.7 552.5,150.5 553.5,152.4 553.5,158.1 554.5,164.3 554.5,157.8 555.5,164.0 555.5,170.8 556.5,173.3 556.5,170.7 557.5,168.6 557.5,171.3 558.5,168.9 558.5,166.1 559.5,162.0 559.5,166.4 560.5,166.2 560.5,164.8 561.5,162.8 561.5,166.7 562.5,169.5 562.5,166.4 563.5,166.5 563.5,168.9 564.5,167.6 564.5,165.5 565.5,167.3 565.5,172.1 566.5,173.0 566.5,171.5 567.5,170.0 567.5,172.1 568.5,172.2 568.5,170.7 569.5,169.2 569.5,171.0 570.5,171.3 570.5,167.0 571.5,166.5 571.5,168.0 572.5,166.8 572.5,164.2 573.5,162.3 573.5,164.5 574.5,162.6 574.5,160.3 575.5,161.6 575.5,163.4 576.5,165.7 576.5,163.1 577.5,162.9 577.5,165.2 578.5,163.2 578.5,160.4 579.5,159.8 579.5,161.6 580.5,160.1 580.5,157.6 581.5,153.9 581.5,157.9 582.5,154.2 582.5,153.1 583.5,153.9 583.5,160.4 584.5,169.1 584.5,159.9 585.5,168.8 585.5,173.7 586.5,174.4 586.5,170.7 587.5,171.4 587.5,173.2 588.5,171.7 588.5,166.2 589.5,164.8 589.5,167.8 590.5,168.5 590.5,166.4" fill="none" stroke="#acba0c" stroke-width="1.35" stroke-linejoin="bevel"/>
<polyline points="35.5,247.8 35.5,249.3 36.5,252.7 36.5,249.0 37.5,252.4 37.5,255.5 38.5,256.9 38.5,255.2 39.5,256.4 39.5,257.9 40.5,256.7 40.5,251.5 41.5,247.7 41.5,251.8 42.5,249.6 42.5,246.8 43.5,247.5 43.5,248.6 44.5,250.0 44.5,248.2 45.5,246.1 45.5,249.2 46.5,246.4 46.5,242.4 47.5,240.9 47.5,242.8 48.5,241.2 48.5,239.7 49.5,240.1 49.5,241.4 50.5,244.4 50.5,240.0 51.5,244.1 51.5,247.5 52.5,249.1 52.5,243.9 53.5,249.0 53.5,250.6 54.5,251.4 54.5,249.7 55.5,248.0 55.5,254.8 56.5,248.6 56.5,246.2 57.5,247.7 57.5,252.4 58.5,252.6 58.5,247.4 59.5,252.3 59.5,258.5 60.5,261.7 60.5,258.2 61.5,253.8 61.5,258.5 62.5,254.1 62.5,245.8 63.5,238.8 63.5,246.1 64.5,247.1 64.5,245.5 65.5,246.8 65.5,253.7 66.5,260.6 66.5,253.4 67.5,258.4 67.5,260.6 68.5,258.7 68.5,254.7 69.5,251.1 69.5,255.0 70.5,251.3 70.5,249.8 71.5,244.1 71.5,250.2 72.5,251.4 72.5,249.9 73.5,250.8 73.5,252.8 74.5,251.7 74.5,250.3 75.5,250.6 75.5,252.9 76.5,254.0 76.5,251.6 77.5,250.9 77.5,253.0 78.5,251.6 78.5,250.0 79.5,248.6 79.5,251.5 80.5,251.5 80.5,249.0 81.5,249.0 81.5,250.1 82.5,249.3 82.5,245.5 83.5,244.2 83.5,245.6 84.5,244.6 84.5,241.8 85.5,239.6 85.5,241.9 86.5,240.6 86.5,238.9 87.5,236.0 87.5,239.2 88.5,238.4 88.5,237.2 89.5,238.1 89.5,241.6 90.5,243.7 90.5,241.6 91.5,242.2 91.5,244.5 92.5,242.5 92.5,240.2 93.5,238.6 93.5,242.6 94.5,239.4 94.5,237.2 95.5,234.7 95.5,237.5 96.5,240.1 96.5,237.2 97.5,239.8 97.5,246.1 98.5,252.2 98.5,245.8 99.5,251.9 99.5,257.3 100.5,252.2 100.5,248.3 101.5,241.7 101.5,248.6 102.5,242.0 102.5,239.3 103.5,241.7 103.5,247.8 104.5,252.0 104.5,247.5 105.5,251.7 105.5,256.8 106.5,260.2 106.5,256.5 107.5,250.4 107.5,256.8 108.5,250.7 108.5,241.3 109.5,234.4 109.5,241.6 110.5,242.9 110.5,241.6 111.5,242.6 111.5,248.1 112.5,249.6 112.5,247.2 113.5,249.3 113.5,253.1 114.5,249.3 114.5,248.4 115.5,241.7 115.5,248.7 116.5,242.0 116.5,237.3 117.5,235.5 117.5,237.6 118.5,239.5 118.5,237.3 119.5,239.2 119.5,244.4 120.5,250.2 120.5,244.1 121.5,246.3 121.5,253.9 122.5,249.4 122.5,246.8 123.5,240.3 123.5,247.1 124.5,240.6 124.5,234.6 125.5,239.0 125.5,240.3 126.5,245.5 126.5,240.0 127.5,244.2 127.5,248.7 128.5,255.9 128.5,248.4 129.5,248.9 129.5,250.4 130.5,249.2 130.5,242.4 131.5,240.1 131.5,242.7 132.5,244.6 132.5,242.4 133.5,244.3 133.5,247.2 134.5,248.0 134.5,246.5 135.5,246.6 135.5,247.9 136.5,249.7 136.5,247.7 137.5,249.4 137.5,250.9 138.5,253.3 138.5,250.6 139.5,252.6 139.5,255.3 140.5,257.4 140.5,255.0 141.5,255.8 141.5,257.6 142.5,256.1 142.5,250.3 143.5,247.3 143.5,250.6 144.5,253.3 144.5,250.3 145.5,253.0 145.5,255.4 146.5,258.3 146.5,255.1 147.5,258.0 147.5,261.4 148.5,264.0 148.5,261.1 149.5,260.4 149.5,267.5 150.5,260.7 150.5,258.3 151.5,254.8 151.5,260.2 152.5,257.5 152.5,252.5 153.5,251.7 153.5,253.5 154.5,252.0 154.5,247.5 155.5,245.7 155.5,247.8 156.5,249.0 156.5,247.7 157.5,246.9 157.5,248.5 158.5,249.1 158.5,247.3 159.5,248.0 159.5,250.7 160.5,250.9 160.5,246.8 161.5,245.5 161.5,247.1 162.5,246.0 162.5,243.5 163.5,243.9 163.5,245.2 164.5,244.6 164.5,243.7 165.5,244.3 165.5,249.2 166.5,250.2 166.5,248.6 167.5,245.2 167.5,251.5 168.5,254.7 168.5,251.2 169.5,254.4 169.5,258.2 170.5,256.1 170.5,254.6 171.5,250.5 171.5,254.9 172.5,252.1 172.5,250.6 173.5,250.8 173.5,252.2 174.5,251.1 174.5,247.8 175.5,244.2 175.5,248.1 176.5,244.5 176.5,243.2 177.5,242.3 177.5,243.6 178.5,242.6 178.5,239.1 179.5,237.8 179.5,239.4 180.5,239.1 180.5,235.6 181.5,237.2 181.5,239.6 182.5,242.6 182.5,239.3 183.5,242.3 183.5,247.2 184.5,247.0 184.5,245.0 185.5,240.9 185.5,245.3 186.5,243.3 186.5,240.9 187.5,238.9 187.5,242.1 188.5,245.4 188.5,241.8 189.5,245.1 189.5,247.6 190.5,249.1 190.5,247.5 191.5,248.8 191.5,251.3 192.5,250.4 192.5,247.8 193.5,244.9 193.5,248.1 194.5,245.2 194.5,239.4 195.5,239.4 195.5,241.4 196.5,241.3 196.5,234.9 197.5,235.1 197.5,236.0 198.5,241.6 198.5,235.7 199.5,241.3 199.5,245.4 200.5,243.5 200.5,242.1 201.5,242.0 201.5,243.2 202.5,247.8 202.5,242.9 203.5,246.4 203.5,248.3 204.5,248.6 204.5,244.6 205.5,246.2 205.5,248.3 206.5,248.4 206.5,246.6 207.5,247.0 207.5,248.3 208.5,248.4 208.5,247.1 209.5,243.6 209.5,247.4 210.5,243.9 210.5,242.0 211.5,242.4 211.5,243.3 212.5,249.2 212.5,243.0 213.5,248.9 213.5,251.4 214.5,257.5 214.5,251.1 215.5,257.1 215.5,258.2 216.5,257.4 216.5,251.9 217.5,251.6 217.5,253.4 218.5,251.9 218.5,247.1 219.5,238.4 219.5,247.4 220.5,242.9 220.5,241.6 221.5,242.6 221.5,249.7 222.5,254.4 222.5,248.9 223.5,251.2 223.5,253.5 224.5,253.9 224.5,249.3 225.5,243.4 225.5,249.6 226.5,243.7 226.5,237.4 227.5,233.5 227.5,237.7 228.5,234.7 228.5,226.8 229.5,234.3 229.5,236.3 230.5,236.5 230.5,234.0 231.5,232.1 231.5,234.3 232.5,237.8 232.5,234.0 233.5,237.5 233.5,239.2 234.5,239.1 234.5,237.7 235.5,233.5 235.5,240.1 236.5,240.4 236.5,238.8 237.5,238.0 237.5,239.5 238.5,242.2 238.5,239.2 239.5,241.9 239.5,246.1 240.5,245.4 240.5,243.2 241.5,240.7 241.5,244.6 242.5,240.8 242.5,239.3 243.5,236.5 243.5,239.6 244.5,236.6 244.5,235.0 245.5,231.6 245.5,235.3 246.5,233.2 246.5,231.0 247.5,230.6 247.5,234.0 248.5,235.2 248.5,233.0 249.5,234.9 249.5,241.1 250.5,248.2 250.5,240.8 251.5,242.2 251.5,243.4 252.5,242.5 252.5,237.8 253.5,234.8 253.5,238.1 254.5,237.1 254.5,235.9 255.5,236.8 255.5,242.2 256.5,242.5 256.5,241.4 257.5,242.1 257.5,243.2 258.5,244.8 258.5,242.6 259.5,238.0 259.5,242.9 260.5,238.3 260.5,236.7 261.5,235.7 261.5,237.8 262.5,236.9 262.5,233.3 263.5,236.6 263.5,245.2 264.5,240.9 264.5,238.9 265.5,240.6 265.5,244.6 266.5,245.7 266.5,244.2 267.5,244.6 267.5,247.9 268.5,246.0 268.5,244.3 269.5,241.1 269.5,244.6 270.5,241.4 270.5,237.6 271.5,234.1 271.5,237.9 272.5,234.4 272.5,229.6 273.5,226.7 273.5,229.9 274.5,234.2 274.5,229.2 275.5,232.1 275.5,234.1 276.5,235.3 276.5,233.4 277.5,234.7 277.5,238.6 278.5,241.1 278.5,238.3 279.5,238.5 279.5,241.7 280.5,242.7 280.5,239.8 281.5,241.5 281.5,243.3 282.5,244.4 282.5,243.0 283.5,241.2 283.5,245.9 284.5,244.5 284.5,242.3 285.5,241.0 285.5,242.6 286.5,241.3 286.5,237.1 287.5,236.3 287.5,238.2 288.5,241.6 288.5,237.5 289.5,239.2 289.5,241.2 290.5,244.7 290.5,240.9 291.5,244.4 291.5,256.2 292.5,250.1 292.5,247.3 293.5,246.1 293.5,248.5 294.5,246.1 294.5,244.8 295.5,240.1 295.5,245.1 296.5,240.4 296.5,236.0 297.5,236.4 297.5,238.0 298.5,237.2 298.5,231.4 299.5,233.9 299.5,236.4 300.5,238.5 300.5,236.1 301.5,238.2 301.5,243.7 302.5,244.5 302.5,242.2 303.5,239.5 303.5,242.5 304.5,241.5 304.5,239.2 305.5,238.5 305.5,240.2 306.5,239.6 306.5,237.2 307.5,235.9 307.5,237.5 308.5,236.2 308.5,234.0 309.5,233.5 309.5,234.7 310.5,239.6 310.5,234.4 311.5,239.3 311.5,241.5 312.5,240.7 312.5,239.3 313.5,237.1 313.5,241.5 314.5,241.4 314.5,238.6 315.5,241.1 315.5,242.1 316.5,241.4 316.5,239.5 317.5,240.5 317.5,242.1 318.5,240.8 318.5,236.7 319.5,234.2 319.5,237.0 320.5,239.4 320.5,236.7 321.5,239.1 321.5,241.6 322.5,243.2 322.5,241.3 323.5,243.2 323.5,245.5 324.5,247.7 324.5,244.1 325.5,244.9 325.5,246.6 326.5,249.6 326.5,242.6 327.5,242.2 327.5,243.9 328.5,246.1 328.5,243.6 329.5,245.7 329.5,246.6 330.5,245.9 330.5,244.2 331.5,234.2 331.5,244.5 332.5,234.5 332.5,231.2 333.5,230.5 333.5,231.9 334.5,231.6 334.5,230.2 335.5,229.3 335.5,231.3 336.5,234.5 336.5,231.0 337.5,234.2 337.5,238.0 338.5,237.9 338.5,236.6 339.5,237.2 339.5,239.7 340.5,240.6 340.5,238.6 341.5,236.1 341.5,238.9 342.5,236.4 342.5,233.8 343.5,235.2 343.5,237.4 344.5,236.3 344.5,234.4 345.5,231.1 345.5,234.7 346.5,241.2 346.5,233.7 347.5,235.9 347.5,237.8 348.5,239.0 348.5,237.5 349.5,238.7 349.5,242.1 350.5,241.3 350.5,239.9 351.5,241.0 351.5,243.4 352.5,244.8 352.5,243.0 353.5,241.4 353.5,244.0 354.5,246.2 354.5,243.7 355.5,245.9 355.5,248.9 356.5,248.5 356.5,246.7 357.5,243.9 357.5,250.2 358.5,244.2 358.5,239.5 359.5,237.6 359.5,241.0 360.5,237.8 360.5,236.5 361.5,237.0 361.5,239.4 362.5,243.5 362.5,239.3 363.5,236.9 363.5,239.5 364.5,237.2 364.5,234.8 365.5,235.5 365.5,237.7 366.5,237.6 366.5,236.4 367.5,231.2 367.5,236.7 368.5,233.6 368.5,232.3 369.5,229.6 369.5,233.1 370.5,240.2 370.5,232.8 371.5,239.9 371.5,243.6 372.5,247.0 372.5,243.3 373.5,246.7 373.5,247.9 374.5,247.0 374.5,242.2 375.5,240.5 375.5,242.5 376.5,245.0 376.5,242.2 377.5,244.7 377.5,246.9 378.5,254.1 378.5,246.6 379.5,252.5 379.5,254.2 380.5,252.8 380.5,248.4 381.5,244.9 381.5,248.7 382.5,245.2 382.5,242.1 383.5,241.1 383.5,243.6 384.5,243.7 384.5,241.6 385.5,243.6 385.5,245.6 386.5,248.0 386.5,245.3 387.5,247.7 387.5,252.7 388.5,255.5 388.5,252.4 389.5,250.9 389.5,254.7 390.5,251.2 390.5,246.9 391.5,244.5 391.5,247.2 392.5,245.7 392.5,240.7 393.5,238.8 393.5,240.8 394.5,239.1 394.5,235.9 395.5,232.3 395.5,236.2 396.5,234.1 396.5,232.9 397.5,233.8 397.5,241.4 398.5,243.0 398.5,241.1 399.5,238.8 399.5,242.5 400.5,239.9 400.5,237.3 401.5,236.7 401.5,238.0 402.5,237.0 402.5,232.7 403.5,236.6 403.5,238.5 404.5,243.5 404.5,238.2 405.5,243.2 405.5,250.4" fill="none" stroke="#54c81c" stroke-width="1.35" stroke-linejoin="bevel"/>
<polyline points="411.5,239.9 411.5,241.8 412.5,240.2 412.5,237.3 413.5,233.1 413.5,237.6 414.5,233.2 414.5,231.4 415.5,227.5 415.5,233.0 416.5,233.0 416.5,232.1 417.5,232.7 417.5,236.0 418.5,237.6 418.5,235.7 419.5,237.4 419.5,238.5 420.5,239.4 420.5,237.9 421.5,234.5 421.5,239.8 422.5,237.3 422.5,232.8 423.5,229.1 423.5,233.1 424.5,229.4 424.5,226.5 425.5,229.1 425.5,231.1 426.5,234.9 426.5,230.8 427.5,234.6 427.5,237.6 428.5,238.0 428.5,236.2 429.5,237.8 429.5,239.6 430.5,240.8 430.5,239.1 431.5,240.5 431.5,246.9 432.5,244.0 432.5,239.3 433.5,234.6 433.5,239.6 434.5,234.9 434.5,228.6 435.5,223.6 435.5,228.9 436.5,226.4 436.5,224.7 437.5,226.1 437.5,230.3 438.5,231.4 438.5,230.0 439.5,230.8 439.5,232.3 440.5,231.1 440.5,227.1 441.5,227.0 441.5,228.8 442.5,228.7 442.5,226.6 443.5,228.4 443.5,232.4 444.5,235.2 444.5,232.1 445.5,234.9 445.5,239.9 446.5,239.4 446.5,238.5 447.5,239.1 447.5,241.8 448.5,239.4 448.5,236.5 449.5,233.6 449.5,236.8 450.5,241.8 450.5,236.3 451.5,237.7 451.5,239.1 452.5,238.0 452.5,232.4 453.5,221.4 453.5,232.7 454.5,227.6 454.5,226.5 455.5,223.9 455.5,226.8 456.5,228.8 456.5,226.5 457.5,228.2 457.5,231.1 458.5,235.6 458.5,230.8 459.5,235.3 459.5,241.0 460.5,248.0 460.5,240.7 461.5,244.4 461.5,245.7 462.5,244.7 462.5,240.0 463.5,236.2 463.5,240.3 464.5,236.6 464.5,235.0 465.5,233.7 465.5,235.1 466.5,237.4 466.5,234.8 467.5,237.0 467.5,239.3 468.5,240.8 468.5,237.1 469.5,228.6 469.5,237.5 470.5,238.1 470.5,237.0 471.5,237.8 471.5,243.3 472.5,248.2 472.5,243.0 473.5,244.9 473.5,245.8 474.5,245.2 474.5,240.0 475.5,233.6 475.5,240.3 476.5,235.6 476.5,232.7 477.5,227.0 477.5,233.0 478.5,228.5 478.5,226.4 479.5,228.2 479.5,231.6 480.5,234.9 480.5,231.3 481.5,234.6 481.5,237.5 482.5,240.1 482.5,237.2 483.5,238.2 483.5,239.9 484.5,239.8 484.5,238.2 485.5,239.2 485.5,241.1 486.5,241.4 486.5,239.1 487.5,238.5 487.5,240.2 488.5,241.6 488.5,239.7 489.5,241.3 489.5,242.5 490.5,241.6 490.5,236.7 491.5,236.1 491.5,239.3 492.5,244.7 492.5,239.0 493.5,244.4 493.5,249.0 494.5,253.6 494.5,248.7 495.5,248.5 495.5,249.9 496.5,248.8 496.5,242.6 497.5,237.2 497.5,242.9 498.5,237.5 498.5,232.3 499.5,237.5 499.5,240.0 500.5,245.8 500.5,239.7 501.5,245.5 501.5,253.3 502.5,256.2 502.5,253.0 503.5,245.2 503.5,253.3 504.5,245.5 504.5,233.8 505.5,227.3 505.5,234.1 506.5,237.6 506.5,233.8 507.5,237.3 507.5,243.6 508.5,249.7 508.5,243.3 509.5,249.4 509.5,254.6 510.5,250.8 510.5,246.0 511.5,244.8 511.5,246.3 512.5,245.2 512.5,243.0 513.5,244.9 513.5,247.8 514.5,252.2 514.5,247.5 515.5,251.9 515.5,257.1 516.5,252.2 516.5,249.8 517.5,241.0 517.5,250.1 518.5,241.3 518.5,236.6 519.5,232.8 519.5,236.9 520.5,237.4 520.5,235.7 521.5,237.1 521.5,239.9 522.5,245.2 522.5,239.6 523.5,244.6 523.5,245.9 524.5,244.7 524.5,243.1 525.5,243.2 525.5,245.2 526.5,244.2 526.5,242.2 527.5,234.6 527.5,242.5 528.5,234.9 528.5,227.9 529.5,226.9 529.5,228.0 530.5,234.3 530.5,226.5 531.5,233.6 531.5,235.2 532.5,237.6 532.5,234.9 533.5,237.3 533.5,245.3 534.5,240.6 534.5,238.2 535.5,235.4 535.5,238.5 536.5,241.2 536.5,236.1 537.5,236.1 537.5,237.8 538.5,236.4 538.5,234.6 539.5,233.6 539.5,235.2 540.5,234.4 540.5,233.2 541.5,234.1 541.5,237.9 542.5,238.4 542.5,236.5 543.5,235.0 543.5,239.3 544.5,238.6 544.5,235.8 545.5,238.3 545.5,240.8 546.5,242.2 546.5,239.1 547.5,241.5 547.5,242.9 548.5,246.4 548.5,242.6 549.5,244.6 549.5,246.4 550.5,244.6 550.5,242.9 551.5,238.9 551.5,243.2 552.5,239.2 552.5,232.0 553.5,237.8 553.5,240.5 554.5,242.3 554.5,239.5 555.5,239.0 555.5,245.2 556.5,250.3 556.5,244.9 557.5,245.9 557.5,246.9 558.5,246.4 558.5,243.3 559.5,238.4 559.5,243.6 560.5,238.7 560.5,233.1 561.5,236.5 561.5,237.9 562.5,240.2 562.5,237.6 563.5,239.9 563.5,243.4 564.5,245.1 564.5,243.0 565.5,243.1 565.5,244.5 566.5,249.7 566.5,244.2 567.5,249.4 567.5,253.4 568.5,254.1 568.5,252.6 569.5,249.7 569.5,252.9 570.5,250.1 570.5,248.0 571.5,248.8 571.5,251.0 572.5,252.8 572.5,250.9 573.5,248.1 573.5,251.2 574.5,248.4 574.5,244.4 575.5,243.4 575.5,245.1 576.5,246.0 576.5,244.8 577.5,244.0 577.5,247.2 578.5,245.5 578.5,242.0 579.5,241.3 579.5,242.2 580.5,244.2 580.5,239.0 581.5,237.7 581.5,239.2 582.5,237.9 582.5,236.8 583.5,237.6 583.5,241.4 584.5,243.0 584.5,240.8 585.5,242.7 585.5,247.6 586.5,252.5 586.5,247.5 587.5,250.6 587.5,252.1 588.5,251.8 588.5,250.6 589.5,246.5 589.5,250.9 590.5,246.8 590.5,242.4" fill="none" stroke="#54c81c" stroke-width="1.35" stroke-linejoin="bevel"/>
<polyline points="35.5,309.3 35.5,315.3 36.5,315.3 36.5,311.0 37.5,309.0 37.5,316.9 38.5,317.5 38.5,312.0 39.5,309.7 39.5,316.6 40.5,311.7 40.5,305.9 41.5,305.4 41.5,313.3 42.5,313.9 42.5,309.7 43.5,307.9 43.5,315.3 44.5,315.7 44.5,310.1 45.5,309.2 45.5,314.9 46.5,317.4 46.5,309.1 47.5,308.0 47.5,312.9 48.5,313.4 48.5,308.0 49.5,309.6 49.5,315.1 50.5,315.4 50.5,307.8 51.5,309.9 51.5,314.6 52.5,314.9 52.5,309.1 53.5,307.4 53.5,311.6 54.5,312.2 54.5,303.7 55.5,307.3 55.5,314.3 56.5,314.8 56.5,310.1 57.5,308.8 57.5,315.9 58.5,314.7 58.5,308.6 59.5,306.9 59.5,313.8 60.5,318.0 60.5,307.0 61.5,306.5 61.5,310.8 62.5,312.6 62.5,306.2 63.5,305.3 63.5,310.8 64.5,310.4 64.5,305.7 65.5,302.6 65.5,309.4 66.5,310.9 66.5,304.0 67.5,306.6 67.5,312.2 68.5,316.3 68.5,308.9 69.5,311.6 69.5,317.6 70.5,316.4 70.5,307.5 71.5,307.3 71.5,311.8 72.5,311.1 72.5,302.2 73.5,309.8 73.5,315.8 74.5,319.7 74.5,309.7 75.5,310.5 75.5,318.3 76.5,316.8 76.5,308.4 77.5,309.8 77.5,316.1 78.5,314.9 78.5,309.8 79.5,307.4 79.5,312.2 80.5,311.6 80.5,306.3 81.5,307.4 81.5,312.5 82.5,315.2 82.5,307.6 83.5,309.4 83.5,314.2 84.5,314.6 84.5,308.7 85.5,310.1 85.5,315.2 86.5,318.0 86.5,304.0 87.5,307.6 87.5,311.9 88.5,310.1 88.5,304.5 89.5,302.6 89.5,309.1 90.5,308.7 90.5,300.7 91.5,302.6 91.5,308.2 92.5,310.4 92.5,302.1 93.5,304.4 93.5,309.2 94.5,310.3 94.5,306.0 95.5,307.2 95.5,314.7 96.5,313.4 96.5,305.6 97.5,308.0 97.5,313.1 98.5,312.3 98.5,306.1 99.5,302.7 99.5,310.2 100.5,310.4 100.5,304.4 101.5,305.9 101.5,311.8 102.5,312.0 102.5,306.5 103.5,307.9 103.5,314.4 104.5,314.8 104.5,307.2 105.5,307.5 105.5,312.4 106.5,312.4 106.5,306.9 107.5,303.3 107.5,310.0 108.5,310.9 108.5,303.2 109.5,305.0 109.5,313.2 110.5,311.3 110.5,306.3 111.5,307.8 111.5,314.3 112.5,311.4 112.5,305.6 113.5,303.8 113.5,311.1 114.5,312.8 114.5,306.4 115.5,304.5 115.5,311.3 116.5,313.9 116.5,307.1 117.5,300.1 117.5,308.9 118.5,310.7 118.5,304.4 119.5,305.1 119.5,312.9 120.5,314.6 120.5,307.3 121.5,310.6 121.5,317.0 122.5,316.5 122.5,309.9 123.5,306.2 123.5,312.3 124.5,310.4 124.5,305.3 125.5,305.7 125.5,309.8 126.5,312.8 126.5,307.8 127.5,308.1 127.5,312.9 128.5,318.0 128.5,311.8 129.5,312.7 129.5,317.6 130.5,317.4 130.5,313.1 131.5,310.9 131.5,318.2 132.5,314.2 132.5,309.0 133.5,307.3 133.5,313.7 134.5,316.0 134.5,311.2 135.5,311.1 135.5,317.8 136.5,315.7 136.5,308.8 137.5,311.0 137.5,315.7 138.5,315.8 138.5,309.5 139.5,308.1 139.5,316.5 140.5,315.9 140.5,309.3 141.5,310.8 141.5,315.2 142.5,316.5 142.5,311.3 143.5,310.4 143.5,317.0 144.5,315.9 144.5,310.4 145.5,311.0 145.5,319.0 146.5,316.9 146.5,308.9 147.5,310.6 147.5,318.4 148.5,311.7 148.5,307.8 149.5,305.1 149.5,317.6 150.5,313.0 150.5,308.2 151.5,311.0 151.5,316.6 152.5,316.3 152.5,311.2 153.5,306.2 153.5,316.3 154.5,316.3 154.5,309.8 155.5,311.7 155.5,316.4 156.5,317.0 156.5,309.9 157.5,310.9 157.5,317.8 158.5,317.1 158.5,308.9 159.5,312.0 159.5,318.0 160.5,317.7 160.5,309.4 161.5,311.2 161.5,315.2 162.5,317.6 162.5,312.0 163.5,311.8 163.5,317.9 164.5,317.1 164.5,311.3 165.5,306.5 165.5,314.2 166.5,317.1 166.5,309.1 167.5,312.2 167.5,319.2 168.5,315.6 168.5,307.9 169.5,312.1 169.5,319.0 170.5,315.4 170.5,310.2 171.5,311.7 171.5,317.0 172.5,315.5 172.5,311.2 173.5,311.3 173.5,316.8 174.5,316.8 174.5,309.7 175.5,307.3 175.5,313.1 176.5,313.3 176.5,304.4 177.5,306.0 177.5,314.0 178.5,318.6 178.5,312.0 179.5,314.2 179.5,320.6 180.5,319.2 180.5,312.6 181.5,307.0 181.5,318.6 182.5,317.4 182.5,312.1 183.5,311.6 183.5,316.1 184.5,314.3 184.5,308.2 185.5,304.9 185.5,312.9 186.5,314.8 186.5,310.6 187.5,310.2 187.5,314.9 188.5,315.6 188.5,310.6 189.5,309.3 189.5,315.1 190.5,315.9 190.5,308.9 191.5,312.4 191.5,317.2 192.5,317.7 192.5,313.1 193.5,308.4 193.5,316.4 194.5,318.6 194.5,311.3 195.5,311.2 195.5,316.6 196.5,317.9 196.5,313.0 197.5,309.6 197.5,315.1 198.5,316.7 198.5,309.6 199.5,310.7 199.5,315.3 200.5,318.8 200.5,313.1 201.5,312.2 201.5,319.1 202.5,319.6 202.5,311.6 203.5,314.1 203.5,319.5 204.5,323.0 204.5,314.9 205.5,314.5 205.5,324.9 206.5,322.9 206.5,313.6 207.5,315.7 207.5,320.3 208.5,323.3 208.5,313.6 209.5,318.7 209.5,324.1 210.5,322.1 210.5,317.2 211.5,317.9 211.5,323.5 212.5,322.4 212.5,316.4 213.5,316.0 213.5,323.6 214.5,323.2 214.5,313.8 215.5,310.0 215.5,319.7 216.5,319.5 216.5,312.9 217.5,313.2 217.5,322.7 218.5,319.6 218.5,314.8 219.5,313.9 219.5,320.7 220.5,321.2 220.5,316.4 221.5,316.3 221.5,323.4 222.5,322.9 222.5,316.4 223.5,315.4 223.5,322.5 224.5,322.9 224.5,316.8 225.5,318.7 225.5,324.4 226.5,324.9 226.5,316.5 227.5,315.0 227.5,320.8 228.5,319.4 228.5,315.6 229.5,311.8 229.5,318.8 230.5,322.0 230.5,316.4 231.5,314.9 231.5,322.0 232.5,321.7 232.5,314.4 233.5,308.7 233.5,319.1 234.5,320.4 234.5,314.1 235.5,312.3 235.5,319.4 236.5,320.0 236.5,313.4 237.5,311.4 237.5,319.6 238.5,319.8 238.5,315.2 239.5,315.3 239.5,325.8 240.5,319.0 240.5,314.1 241.5,313.1 241.5,319.1 242.5,318.6 242.5,313.8 243.5,315.1 243.5,321.8 244.5,320.0 244.5,314.9 245.5,315.6 245.5,323.4 246.5,318.9 246.5,313.5 247.5,314.4 247.5,322.0 248.5,321.0 248.5,317.1 249.5,315.6 249.5,321.7 250.5,321.3 250.5,316.1 251.5,314.8 251.5,320.8 252.5,319.1 252.5,308.5 253.5,316.6 253.5,321.7 254.5,320.8 254.5,314.9 255.5,314.4 255.5,319.9 256.5,320.3 256.5,312.4 257.5,312.9 257.5,324.0 258.5,322.0 258.5,316.6 259.5,315.7 259.5,320.0 260.5,320.2 260.5,315.3 261.5,316.5 261.5,322.0 262.5,320.7 262.5,315.7 263.5,315.2 263.5,321.1 264.5,320.3 264.5,313.3 265.5,311.3 265.5,317.9 266.5,318.8 266.5,314.8 267.5,312.0 267.5,322.5 268.5,324.3 268.5,318.6 269.5,317.6 269.5,324.4 270.5,324.1 270.5,317.4 271.5,318.1 271.5,324.2 272.5,325.3 272.5,319.0 273.5,317.8 273.5,323.6 274.5,324.2 274.5,316.9 275.5,313.1 275.5,318.8 276.5,318.1 276.5,312.5 277.5,314.9 277.5,319.6 278.5,322.9 278.5,315.5 279.5,318.2 279.5,324.9 280.5,323.5 280.5,316.0 281.5,318.1 281.5,326.1 282.5,322.6 282.5,318.0 283.5,318.2 283.5,323.1 284.5,324.3 284.5,318.0 285.5,320.1 285.5,331.2 286.5,325.4 286.5,318.8 287.5,318.1 287.5,323.0 288.5,324.1 288.5,316.8 289.5,319.9 289.5,325.3 290.5,330.6 290.5,324.8 291.5,322.3 291.5,328.1 292.5,328.1 292.5,320.9 293.5,318.8 293.5,328.6 294.5,328.9 294.5,315.9 295.5,323.2 295.5,329.9 296.5,325.8 296.5,318.4 297.5,319.0 297.5,324.2 298.5,322.3 298.5,317.9 299.5,317.3 299.5,324.4 300.5,324.8 300.5,318.3 301.5,313.9 301.5,320.7 302.5,322.0 302.5,318.0 303.5,317.3 303.5,322.5 304.5,325.9 304.5,320.4 305.5,314.3 305.5,327.1 306.5,330.8 306.5,322.5 307.5,321.1 307.5,328.6 308.5,326.6 308.5,322.1 309.5,318.5 309.5,324.3 310.5,324.3 310.5,317.9 311.5,318.1 311.5,325.2 312.5,327.8 312.5,315.4 313.5,319.9 313.5,326.4 314.5,329.2 314.5,323.8 315.5,322.1 315.5,327.1 316.5,326.4 316.5,318.5 317.5,317.8 317.5,323.8 318.5,323.1 318.5,316.1 319.5,318.7 319.5,327.1 320.5,327.7 320.5,321.7 321.5,323.4 321.5,329.8 322.5,331.6 322.5,322.2 323.5,324.8 323.5,333.3 324.5,330.7 324.5,323.8 325.5,323.2 325.5,329.0 326.5,334.4 326.5,324.4 327.5,323.5 327.5,331.9 328.5,328.9 328.5,323.8 329.5,323.7 329.5,329.4 330.5,332.0 330.5,325.2 331.5,327.1 331.5,334.2 332.5,332.5 332.5,325.4 333.5,325.0 333.5,330.4 334.5,330.9 334.5,325.9 335.5,324.0 335.5,333.6 336.5,332.0 336.5,324.7 337.5,322.8 337.5,327.4 338.5,326.9 338.5,321.7 339.5,318.6 339.5,324.7 340.5,327.1 340.5,320.4 341.5,322.7 341.5,328.3 342.5,333.3 342.5,324.3 343.5,320.7 343.5,327.6 344.5,324.8 344.5,317.6 345.5,320.5 345.5,326.6 346.5,330.0 346.5,324.8 347.5,327.6 347.5,332.6 348.5,334.4 348.5,327.9 349.5,326.9 349.5,332.2 350.5,330.5 350.5,323.5 351.5,318.1 351.5,328.2 352.5,336.9 352.5,322.0 353.5,325.0 353.5,330.3 354.5,331.4 354.5,324.6 355.5,323.5 355.5,329.0 356.5,330.9 356.5,321.9 357.5,321.7 357.5,327.2 358.5,326.3 358.5,319.1 359.5,322.7 359.5,328.8 360.5,329.6 360.5,323.9 361.5,325.3 361.5,331.4 362.5,332.0 362.5,326.2 363.5,326.8 363.5,331.8 364.5,329.2 364.5,324.9 365.5,324.8 365.5,332.3 366.5,333.9 366.5,325.1 367.5,329.9 367.5,335.2 368.5,332.2 368.5,326.7 369.5,322.6 369.5,328.6 370.5,329.6 370.5,324.0 371.5,324.3 371.5,330.3 372.5,330.3 372.5,326.1 373.5,326.1 373.5,330.5 374.5,332.2 374.5,321.0 375.5,328.4 375.5,332.6 376.5,334.2 376.5,323.5 377.5,326.2 377.5,331.9 378.5,331.5 378.5,326.7 379.5,323.9 379.5,331.7 380.5,329.9 380.5,325.3 381.5,323.8 381.5,327.9 382.5,333.0 382.5,325.2 383.5,327.8 383.5,334.4 384.5,333.5 384.5,329.1 385.5,328.5 385.5,332.5 386.5,334.3 386.5,328.7 387.5,329.9 387.5,339.3 388.5,336.9 388.5,332.6 389.5,328.9 389.5,335.3 390.5,335.6 390.5,328.6 391.5,326.5 391.5,332.3 392.5,331.9 392.5,327.7 393.5,322.6 393.5,328.9 394.5,329.5 394.5,324.6 395.5,321.0 395.5,327.7 396.5,330.7 396.5,324.5 397.5,325.2 397.5,331.4 398.5,332.9 398.5,326.9 399.5,327.8 399.5,340.9 400.5,332.1 400.5,326.6 401.5,325.9 401.5,332.4 402.5,333.1 402.5,328.8 403.5,328.8 403.5,334.4 404.5,336.6 404.5,326.7 405.5,328.0 405.5,335.7 406.5,335.3 406.5,329.8" fill="none" stroke="#16c49c" stroke-width="1.35" stroke-linejoin="bevel"/>
<polyline points="412.5,318.2 412.5,325.0 413.5,326.1 413.5,317.2 414.5,317.5 414.5,324.3 415.5,323.3 415.5,312.5 416.5,315.9 416.5,325.6 417.5,323.3 417.5,317.7 418.5,316.5 418.5,323.3 419.5,321.4 419.5,315.1 420.5,319.3 420.5,324.7 421.5,329.3 421.5,320.2 422.5,321.2 422.5,325.5 423.5,324.5 423.5,320.5 424.5,320.0 424.5,326.9 425.5,328.3 425.5,321.4 426.5,317.5 426.5,325.5 427.5,324.3 427.5,318.0 428.5,317.1 428.5,327.1 429.5,324.0 429.5,316.5 430.5,315.3 430.5,319.3 431.5,319.8 431.5,314.3 432.5,313.7 432.5,318.8 433.5,322.2 433.5,315.4 434.5,314.5 434.5,325.9 435.5,319.7 435.5,314.0 436.5,313.1 436.5,319.4 437.5,317.6 437.5,313.1 438.5,312.4 438.5,318.9 439.5,320.4 439.5,315.8 440.5,314.6 440.5,319.8 441.5,319.3 441.5,313.2 442.5,312.9 442.5,322.3 443.5,318.7 443.5,313.6 444.5,314.6 444.5,318.9 445.5,320.1 445.5,314.2 446.5,312.6 446.5,319.7 447.5,321.7 447.5,314.0 448.5,315.4 448.5,324.7 449.5,322.8 449.5,315.8 450.5,317.5 450.5,324.4 451.5,321.3 451.5,315.5 452.5,314.2 452.5,318.5 453.5,318.0 453.5,307.5 454.5,314.2 454.5,318.3 455.5,322.1 455.5,312.9 456.5,314.5 456.5,320.6 457.5,319.9 457.5,309.1 458.5,310.8 458.5,320.1 459.5,315.2 459.5,308.3 460.5,306.5 460.5,315.6 461.5,321.3 461.5,313.0 462.5,313.0 462.5,318.9 463.5,320.5 463.5,312.8 464.5,312.0 464.5,320.3 465.5,319.7 465.5,315.0 466.5,314.3 466.5,323.1 467.5,322.0 467.5,314.8 468.5,312.9 468.5,319.8 469.5,315.8 469.5,311.4 470.5,312.0 470.5,318.6 471.5,318.8 471.5,313.5 472.5,312.2 472.5,318.1 473.5,323.7 473.5,311.2 474.5,312.0 474.5,316.9 475.5,320.8 475.5,314.5 476.5,310.8 476.5,320.1 477.5,315.4 477.5,309.7 478.5,308.8 478.5,314.2 479.5,314.1 479.5,308.0 480.5,313.5 480.5,319.5 481.5,319.2 481.5,312.1 482.5,314.4 482.5,318.9 483.5,316.0 483.5,308.7 484.5,311.3 484.5,318.4 485.5,314.8 485.5,309.9 486.5,308.2 486.5,315.0 487.5,310.4 487.5,305.3 488.5,303.0 488.5,312.8 489.5,316.1 489.5,308.0 490.5,311.2 490.5,316.4 491.5,318.3 491.5,311.2 492.5,310.9 492.5,317.8 493.5,315.0 493.5,309.3 494.5,308.2 494.5,314.0 495.5,312.3 495.5,307.4 496.5,309.3 496.5,314.7 497.5,315.3 497.5,309.1 498.5,307.4 498.5,318.0 499.5,314.4 499.5,308.8 500.5,308.2 500.5,313.6 501.5,312.2 501.5,307.7 502.5,309.3 502.5,314.7 503.5,314.7 503.5,310.4 504.5,311.2 504.5,317.9 505.5,315.5 505.5,309.6 506.5,311.8 506.5,317.8 507.5,317.0 507.5,311.1 508.5,309.5 508.5,315.8 509.5,316.2 509.5,307.1 510.5,310.1 510.5,316.9 511.5,324.4 511.5,310.7 512.5,311.1 512.5,316.4 513.5,315.4 513.5,311.1 514.5,309.4 514.5,315.5 515.5,314.5 515.5,309.9 516.5,307.7 516.5,315.1 517.5,318.0 517.5,310.3 518.5,311.6 518.5,316.7 519.5,318.2 519.5,311.9 520.5,308.6 520.5,314.2 521.5,313.3 521.5,306.2 522.5,306.0 522.5,312.0 523.5,310.7 523.5,306.0 524.5,308.0 524.5,312.1 525.5,313.6 525.5,304.1 526.5,304.8 526.5,311.7 527.5,310.1 527.5,305.2 528.5,305.3 528.5,312.4 529.5,314.8 529.5,307.4 530.5,308.6 530.5,313.6 531.5,313.9 531.5,308.1 532.5,306.8 532.5,317.4 533.5,319.3 533.5,307.7 534.5,310.3 534.5,316.6 535.5,317.1 535.5,310.8 536.5,309.4 536.5,316.4 537.5,315.4 537.5,308.8 538.5,307.2 538.5,314.4 539.5,314.1 539.5,304.5 540.5,306.2 540.5,312.6 541.5,310.5 541.5,304.5 542.5,307.0 542.5,312.0 543.5,312.3 543.5,306.3 544.5,306.3 544.5,312.0 545.5,311.3 545.5,305.1 546.5,308.7 546.5,315.0 547.5,316.2 547.5,310.1 548.5,309.3 548.5,314.2 549.5,313.0 549.5,308.1 550.5,305.3 550.5,314.2 551.5,312.5 551.5,307.7 552.5,306.0 552.5,317.8 553.5,311.5 553.5,305.0 554.5,306.6 554.5,313.5 555.5,314.2 555.5,308.2 556.5,308.4 556.5,318.7 557.5,313.0 557.5,307.0 558.5,310.4 558.5,316.3 559.5,314.4 559.5,309.2 560.5,307.6 560.5,313.6 561.5,314.0 561.5,307.4 562.5,309.9 562.5,315.0 563.5,317.7 563.5,311.3 564.5,309.6 564.5,314.7 565.5,315.1 565.5,305.3 566.5,302.9 566.5,310.7 567.5,307.5 567.5,302.0 568.5,304.3 568.5,311.1 569.5,314.0 569.5,307.0 570.5,308.0 570.5,314.3 571.5,310.0 571.5,304.0 572.5,305.6 572.5,312.7 573.5,313.8 573.5,307.6 574.5,309.9 574.5,314.7 575.5,313.1 575.5,308.9 576.5,309.4 576.5,314.3 577.5,313.3 577.5,309.3 578.5,310.0 578.5,314.3 579.5,314.5 579.5,309.1 580.5,307.5 580.5,312.3 581.5,320.6 581.5,307.1 582.5,309.3 582.5,316.4 583.5,314.5 583.5,310.8 584.5,307.9 584.5,313.2 585.5,313.4 585.5,308.3 586.5,309.4 586.5,314.2 587.5,315.7 587.5,302.9 588.5,310.1 588.5,317.5 589.5,317.9 589.5,311.1 590.5,310.6 590.5,316.4" fill="none" stroke="#16c49c" stroke-width="1.35" stroke-linejoin="bevel"/>
<polyline points="35.5,386.3 35.5,393.7 36.5,391.9 36.5,388.4 37.5,386.3 37.5,393.1 38.5,387.3 38.5,384.0 39.5,381.8 39.5,389.3 40.5,388.8 40.5,382.8 41.5,385.0 41.5,388.2 42.5,388.3 42.5,381.6 43.5,380.8 43.5,388.7 44.5,385.2 44.5,380.1 45.5,380.6 45.5,386.7 46.5,387.7 46.5,382.8 47.5,385.6 47.5,390.5 48.5,392.6 48.5,385.9 49.5,387.4 49.5,401.8 50.5,390.6 50.5,386.0 51.5,375.2 51.5,389.7 52.5,387.7 52.5,379.2 53.5,386.0 53.5,390.2 54.5,389.3 54.5,382.6 55.5,378.1 55.5,391.1 56.5,386.3 56.5,381.3 57.5,378.0 57.5,384.9 58.5,383.5 58.5,372.9 59.5,373.5 59.5,386.3 60.5,389.0 60.5,385.5 61.5,385.8 61.5,389.6 62.5,391.2 62.5,387.6 63.5,385.3 63.5,392.1 64.5,393.0 64.5,385.6 65.5,384.0 65.5,390.4 66.5,389.1 66.5,384.4 67.5,387.2 67.5,391.1 68.5,391.3 68.5,384.6 69.5,386.1 69.5,397.5 70.5,390.3 70.5,385.0 71.5,384.6 71.5,389.3 72.5,390.5 72.5,386.0 73.5,384.7 73.5,394.3 74.5,389.8 74.5,385.6 75.5,382.7 75.5,387.7 76.5,390.2 76.5,382.9 77.5,380.2 77.5,384.6 78.5,391.6 78.5,381.2 79.5,380.9 79.5,391.9 80.5,388.4 80.5,382.7 81.5,381.4 81.5,387.8 82.5,384.3 82.5,380.4 83.5,376.9 83.5,383.9 84.5,383.1 84.5,375.5 85.5,374.0 85.5,381.2 86.5,382.5 86.5,378.1 87.5,378.3 87.5,383.2 88.5,382.2 88.5,378.0 89.5,378.6 89.5,382.3 90.5,387.1 90.5,382.0 91.5,382.5 91.5,386.3 92.5,390.1 92.5,381.6 93.5,379.0 93.5,390.3 94.5,386.5 94.5,379.0 95.5,380.7 95.5,390.1 96.5,386.2 96.5,382.4 97.5,383.2 97.5,386.4 98.5,391.2 98.5,384.0 99.5,384.6 99.5,389.2 100.5,391.8 100.5,386.1 101.5,384.7 101.5,389.7 102.5,386.5 102.5,381.3 103.5,382.1 103.5,386.3 104.5,387.0 104.5,381.5 105.5,383.5 105.5,388.5 106.5,387.8 106.5,381.4 107.5,384.3 107.5,390.4 108.5,389.0 108.5,381.6 109.5,380.7 109.5,388.3 110.5,393.8 110.5,383.1 111.5,382.8 111.5,387.7 112.5,387.1 112.5,383.8 113.5,378.1 113.5,388.0 114.5,387.1 114.5,381.1 115.5,380.4 115.5,386.2 116.5,385.3 116.5,380.3 117.5,381.5 117.5,387.0 118.5,390.9 118.5,386.5 119.5,385.3 119.5,389.3 120.5,388.3 120.5,383.8 121.5,380.5 121.5,386.5 122.5,386.2 122.5,382.4 123.5,382.9 123.5,386.7 124.5,388.2 124.5,383.5 125.5,385.8 125.5,390.2 126.5,393.3 126.5,386.8 127.5,387.2 127.5,392.3 128.5,392.9 128.5,388.5 129.5,387.3 129.5,392.0 130.5,392.6 130.5,388.5 131.5,389.0 131.5,392.9 132.5,401.4 132.5,391.5 133.5,389.8 133.5,397.4 134.5,392.1 134.5,386.9 135.5,383.5 135.5,392.6 136.5,390.5 136.5,384.8 137.5,383.7 137.5,392.7 138.5,393.5 138.5,389.2 139.5,385.0 139.5,396.5 140.5,392.4 140.5,385.3 141.5,385.6 141.5,390.9 142.5,389.3 142.5,385.3 143.5,385.2 143.5,389.8 144.5,390.2 144.5,385.4 145.5,387.8 145.5,392.3 146.5,398.2 146.5,383.9 147.5,388.8 147.5,392.9 148.5,394.1 148.5,386.7 149.5,386.8 149.5,392.0 150.5,391.9 150.5,383.8 151.5,385.0 151.5,389.0 152.5,393.5 152.5,386.6 153.5,389.6 153.5,406.3 154.5,394.4 154.5,386.7 155.5,385.7 155.5,390.4 156.5,390.4 156.5,385.2 157.5,383.0 157.5,388.8 158.5,396.9 158.5,388.5 159.5,388.4 159.5,394.2 160.5,395.7 160.5,389.7 161.5,387.5 161.5,391.9 162.5,391.2 162.5,387.5 163.5,387.7 163.5,391.3 164.5,390.5 164.5,386.2 165.5,386.9 165.5,390.3 166.5,392.9 166.5,387.2 167.5,386.3 167.5,393.1 168.5,395.1 168.5,387.5 169.5,388.6 169.5,393.3 170.5,390.3 170.5,385.5 171.5,386.8 171.5,394.1 172.5,388.4 172.5,383.7 173.5,388.1 173.5,396.2 174.5,391.3 174.5,382.0 175.5,385.1 175.5,390.3 176.5,388.8 176.5,382.0 177.5,381.6 177.5,387.8 178.5,386.7 178.5,382.9 179.5,382.2 179.5,389.9 180.5,389.9 180.5,384.4 181.5,386.8 181.5,395.7 182.5,394.2 182.5,387.9 183.5,384.6 183.5,390.9 184.5,394.6 184.5,384.5 185.5,387.2 185.5,391.5 186.5,395.0 186.5,388.4 187.5,389.8 187.5,397.0 188.5,396.2 188.5,392.6 189.5,388.7 189.5,394.0 190.5,391.7 190.5,384.4 191.5,387.0 191.5,397.1 192.5,395.4 192.5,390.1 193.5,385.1 193.5,396.8 194.5,396.4 194.5,392.6 195.5,390.1 195.5,395.9 196.5,393.9 196.5,388.4 197.5,388.1 197.5,392.8 198.5,393.9 198.5,389.2 199.5,388.9 199.5,395.1 200.5,398.8 200.5,386.5 201.5,394.1 201.5,400.4 202.5,398.3 202.5,391.9 203.5,395.0 203.5,398.0 204.5,397.6 204.5,390.9 205.5,387.4 205.5,398.2 206.5,397.2 206.5,393.0 207.5,394.6 207.5,400.1 208.5,397.5 208.5,393.6 209.5,394.1 209.5,400.0 210.5,398.0 210.5,389.7 211.5,392.1 211.5,397.9 212.5,396.3 212.5,392.1 213.5,391.6 213.5,399.9 214.5,399.4 214.5,394.1 215.5,392.9 215.5,398.7 216.5,399.8 216.5,395.0 217.5,395.0 217.5,401.9 218.5,402.3 218.5,397.3 219.5,397.2 219.5,405.9 220.5,401.0 220.5,394.1 221.5,390.5 221.5,397.0 222.5,393.7 222.5,387.3 223.5,391.0 223.5,394.6 224.5,396.3 224.5,391.6 225.5,395.0 225.5,402.0 226.5,399.4 226.5,393.7 227.5,394.2 227.5,399.0 228.5,397.3 228.5,384.9 229.5,388.6 229.5,392.3 230.5,394.4 230.5,390.7 231.5,387.8 231.5,400.8 232.5,398.3 232.5,392.3 233.5,391.3 233.5,395.0 234.5,393.8 234.5,389.2 235.5,388.9 235.5,394.5 236.5,394.1 236.5,390.7 237.5,386.3 237.5,396.4 238.5,397.5 238.5,391.2 239.5,390.5 239.5,394.2 240.5,395.5 240.5,390.1 241.5,391.9 241.5,396.4 242.5,399.2 242.5,392.4 243.5,393.1 243.5,398.6 244.5,398.7 244.5,394.8 245.5,394.2 245.5,402.7 246.5,397.9 246.5,394.3 247.5,392.0 247.5,397.0 248.5,396.2 248.5,387.0 249.5,390.3 249.5,397.7 250.5,400.8 250.5,394.6 251.5,394.2 251.5,397.4 252.5,398.4 252.5,392.8 253.5,389.7 253.5,399.4 254.5,400.3 254.5,396.1 255.5,395.5 255.5,399.0 256.5,399.6 256.5,393.8 257.5,390.9 257.5,396.8 258.5,406.0 258.5,393.8 259.5,396.5 259.5,402.4 260.5,400.4 260.5,395.2 261.5,393.7 261.5,399.4 262.5,396.6 262.5,390.9 263.5,391.5 263.5,396.3 264.5,396.5 264.5,389.7 265.5,390.2 265.5,395.1 266.5,392.9 266.5,389.7 267.5,392.6 267.5,399.4 268.5,401.9 268.5,397.4 269.5,398.7 269.5,407.5 270.5,401.5 270.5,394.5 271.5,397.7 271.5,402.5 272.5,407.5 272.5,396.3 273.5,399.5 273.5,404.1 274.5,400.3 274.5,392.7 275.5,394.0 275.5,398.8 276.5,398.4 276.5,393.7 277.5,394.5 277.5,401.9 278.5,403.0 278.5,393.7 279.5,394.1 279.5,401.0 280.5,401.4 280.5,395.5 281.5,397.4 281.5,401.9 282.5,403.1 282.5,400.2 283.5,396.8 283.5,404.1 284.5,401.8 284.5,396.7 285.5,394.9 285.5,400.6 286.5,400.4 286.5,394.2 287.5,396.1 287.5,403.8 288.5,401.1 288.5,395.2 289.5,385.5 289.5,398.3 290.5,401.3 290.5,391.1 291.5,395.2 291.5,401.4 292.5,407.5 292.5,397.3 293.5,396.9 293.5,404.5 294.5,403.0 294.5,397.4 295.5,397.2 295.5,400.4 296.5,403.8 296.5,396.5 297.5,389.1 297.5,399.4 298.5,397.6 298.5,391.3 299.5,392.8 299.5,399.9 300.5,400.7 300.5,394.8 301.5,397.4 301.5,401.0 302.5,408.5 302.5,399.8 303.5,397.5 303.5,402.0 304.5,402.3 304.5,397.7 305.5,392.2 305.5,398.3 306.5,400.6 306.5,395.2 307.5,396.6 307.5,403.6 308.5,402.6 308.5,396.9 309.5,397.5 309.5,401.1 310.5,405.1 310.5,397.2 311.5,397.3 311.5,402.6 312.5,402.5 312.5,398.9 313.5,392.9 313.5,401.5 314.5,397.8 314.5,387.1 315.5,390.5 315.5,396.1 316.5,398.7 316.5,390.4 317.5,392.8 317.5,398.3 318.5,400.4 318.5,396.7 319.5,391.8 319.5,401.4 320.5,403.8 320.5,394.4 321.5,398.4 321.5,401.9 322.5,409.2 322.5,394.8 323.5,395.9 323.5,403.5 324.5,404.5 324.5,399.0 325.5,398.8 325.5,403.0 326.5,404.0 326.5,398.1 327.5,397.5 327.5,401.5 328.5,404.3 328.5,399.7 329.5,396.9 329.5,402.8 330.5,400.5 330.5,394.7 331.5,386.8 331.5,399.7 332.5,398.7 332.5,394.0 333.5,395.7 333.5,400.9 334.5,400.2 334.5,395.3 335.5,396.8 335.5,401.8 336.5,398.7 336.5,394.0 337.5,396.0 337.5,403.6 338.5,400.0 338.5,395.0 339.5,398.1 339.5,402.4 340.5,401.2 340.5,395.9 341.5,392.4 341.5,402.4 342.5,401.2 342.5,392.5 343.5,399.2 343.5,404.3 344.5,402.5 344.5,398.2 345.5,395.4 345.5,404.5 346.5,402.4 346.5,398.5 347.5,396.6 347.5,402.6 348.5,403.2 348.5,394.8 349.5,396.0 349.5,401.5 350.5,403.0 350.5,398.1 351.5,396.8 351.5,402.5 352.5,403.5 352.5,398.6 353.5,398.1 353.5,404.0 354.5,405.2 354.5,397.4 355.5,399.1 355.5,403.2 356.5,408.2 356.5,398.3 357.5,396.7 357.5,400.9 358.5,399.2 358.5,393.6 359.5,393.4 359.5,400.1 360.5,404.1 360.5,394.6 361.5,399.3 361.5,405.1 362.5,406.6 362.5,400.6 363.5,397.8 363.5,402.2 364.5,400.6 364.5,394.0 365.5,393.5 365.5,399.3 366.5,399.7 366.5,394.4 367.5,397.8 367.5,401.3 368.5,400.8 368.5,390.4 369.5,394.8 369.5,401.3 370.5,402.9 370.5,393.4 371.5,393.4 371.5,405.4 372.5,407.9 372.5,400.7 373.5,398.2 373.5,405.9 374.5,406.7 374.5,402.6 375.5,398.9 375.5,403.3 376.5,407.0 376.5,401.2 377.5,398.4 377.5,402.7 378.5,405.1 378.5,400.7 379.5,399.6 379.5,403.4 380.5,408.4 380.5,398.8 381.5,403.3 381.5,407.4 382.5,407.0 382.5,401.0 383.5,400.3 383.5,404.9 384.5,403.0 384.5,398.8 385.5,392.8 385.5,402.6 386.5,406.8 386.5,398.6 387.5,400.6 387.5,406.5 388.5,408.0 388.5,404.3 389.5,399.5 389.5,407.0 390.5,405.6 390.5,402.2 391.5,398.1 391.5,404.0 392.5,404.0 392.5,392.8 393.5,400.2 393.5,409.9 394.5,407.7 394.5,404.5 395.5,398.1 395.5,405.8 396.5,406.8 396.5,402.9 397.5,397.1 397.5,403.8 398.5,404.9 398.5,400.4 399.5,398.5 399.5,402.7 400.5,406.7 400.5,402.0 401.5,402.7 401.5,408.2 402.5,408.7 402.5,404.9 403.5,403.4 403.5,408.9 404.5,411.3 404.5,404.8 405.5,402.9 405.5,409.3 406.5,411.5 406.5,405.1" fill="none" stroke="#1cbce4" stroke-width="1.35" stroke-linejoin="bevel"/>
<polyline points="412.5,389.1 412.5,402.3 413.5,396.2 413.5,385.8 414.5,387.0 414.5,396.3 415.5,394.9 415.5,383.3 416.5,384.3 416.5,391.0 417.5,388.8 417.5,380.9 418.5,381.5 418.5,392.0 419.5,387.3 419.5,379.5 420.5,381.4 420.5,392.4 421.5,395.1 421.5,390.9 422.5,385.6 422.5,392.9 423.5,388.3 423.5,378.9 424.5,373.4 424.5,381.9 425.5,380.1 425.5,374.8 426.5,379.8 426.5,390.5 427.5,392.9 427.5,382.9 428.5,387.3 428.5,397.5 429.5,388.0 429.5,380.9 430.5,387.1 430.5,391.5 431.5,393.3 431.5,387.3 432.5,386.7 432.5,393.4 433.5,394.2 433.5,383.9 434.5,386.7 434.5,395.8 435.5,393.3 435.5,380.7 436.5,385.0 436.5,390.8 437.5,389.1 437.5,383.7 438.5,381.6 438.5,397.2 439.5,385.4 439.5,375.8 440.5,382.8 440.5,386.9 441.5,388.7 441.5,382.6 442.5,382.1 442.5,390.9 443.5,391.9 443.5,385.1 444.5,382.1 444.5,389.1 445.5,389.9 445.5,381.8 446.5,376.9 446.5,390.1 447.5,400.6 447.5,385.9 448.5,388.8 448.5,396.5 449.5,392.9 449.5,383.0 450.5,383.5 450.5,390.0 451.5,388.4 451.5,378.1 452.5,383.6 452.5,389.6 453.5,396.7 453.5,382.8 454.5,395.7 454.5,401.6 455.5,399.5 455.5,393.5 456.5,387.5 456.5,395.3 457.5,391.4 457.5,386.5 458.5,386.5 458.5,392.5 459.5,394.3 459.5,386.5 460.5,386.1 460.5,391.5 461.5,392.2 461.5,387.7 462.5,390.5 462.5,400.0 463.5,397.0 463.5,386.7 464.5,389.6 464.5,396.9 465.5,393.8 465.5,386.3 466.5,386.4 466.5,393.3 467.5,392.7 467.5,384.6 468.5,384.7 468.5,393.2 469.5,392.2 469.5,382.0 470.5,387.8 470.5,393.7 471.5,391.2 471.5,384.8 472.5,386.4 472.5,394.3 473.5,393.8 473.5,387.6 474.5,390.1 474.5,396.5 475.5,395.4 475.5,389.4 476.5,391.9 476.5,399.0 477.5,400.6 477.5,393.4 478.5,394.3 478.5,400.4 479.5,398.4 479.5,389.6 480.5,390.4 480.5,400.2 481.5,401.5 481.5,392.0 482.5,391.6 482.5,398.5 483.5,399.6 483.5,391.9 484.5,387.2 484.5,392.5 485.5,393.7 485.5,381.5 486.5,387.8 486.5,393.7 487.5,393.4 487.5,388.5 488.5,387.6 488.5,394.6 489.5,395.4 489.5,390.1 490.5,389.4 490.5,397.9 491.5,398.0 491.5,385.1 492.5,385.3 492.5,399.4 493.5,393.8 493.5,383.7 494.5,385.1 494.5,394.5 495.5,399.7 495.5,388.8 496.5,387.1 496.5,395.5 497.5,397.2 497.5,390.8 498.5,386.2 498.5,393.2 499.5,397.6 499.5,390.3 500.5,389.8 500.5,397.6 501.5,397.6 501.5,390.2 502.5,387.9 502.5,394.1 503.5,399.7 503.5,389.4 504.5,393.5 504.5,400.2 505.5,407.4 505.5,394.1 506.5,391.6 506.5,398.2 507.5,396.5 507.5,388.8 508.5,386.4 508.5,394.2 509.5,398.8 509.5,387.9 510.5,387.2 510.5,393.9 511.5,397.8 511.5,389.9 512.5,381.4 512.5,392.6 513.5,393.8 513.5,383.2 514.5,382.5 514.5,389.2 515.5,393.7 515.5,386.0 516.5,386.2 516.5,392.9 517.5,395.6 517.5,390.5 518.5,391.5 518.5,395.8 519.5,395.7 519.5,384.2 520.5,386.8 520.5,391.8 521.5,391.0 521.5,385.6 522.5,386.7 522.5,393.6 523.5,404.4 523.5,385.5 524.5,380.9 524.5,389.9 525.5,393.8 525.5,387.1 526.5,388.9 526.5,399.8 527.5,399.7 527.5,383.6 528.5,386.1 528.5,393.0 529.5,398.5 529.5,383.7 530.5,382.7 530.5,393.5 531.5,395.7 531.5,389.8 532.5,388.3 532.5,392.8 533.5,391.9 533.5,378.9 534.5,386.6 534.5,392.8 535.5,391.6 535.5,387.6 536.5,380.8 536.5,393.0 537.5,392.4 537.5,384.1 538.5,383.9 538.5,392.5 539.5,389.8 539.5,383.5 540.5,381.3 540.5,390.0 541.5,393.2 541.5,382.7 542.5,385.4 542.5,393.1 543.5,391.4 543.5,383.2 544.5,384.4 544.5,391.3 545.5,389.0 545.5,376.8 546.5,386.5 546.5,392.1 547.5,390.7 547.5,384.3 548.5,383.0 548.5,389.6 549.5,389.2 549.5,383.3 550.5,383.5 550.5,387.9 551.5,391.8 551.5,381.3 552.5,384.1 552.5,390.5 553.5,388.2 553.5,384.1 554.5,376.3 554.5,387.4 555.5,392.1 555.5,382.8 556.5,383.5 556.5,389.0 557.5,389.7 557.5,382.6 558.5,385.4 558.5,394.7 559.5,390.5 559.5,385.2 560.5,381.1 560.5,387.8 561.5,388.7 561.5,380.0 562.5,384.3 562.5,391.2 563.5,399.3 563.5,384.8 564.5,382.5 564.5,390.0 565.5,389.2 565.5,380.3 566.5,384.4 566.5,389.7 567.5,393.0 567.5,388.5 568.5,387.2 568.5,394.4 569.5,391.2 569.5,386.6 570.5,375.5 570.5,387.8 571.5,389.7 571.5,382.4 572.5,382.6 572.5,391.6 573.5,389.0 573.5,381.4 574.5,382.8 574.5,393.5 575.5,390.0 575.5,377.6 576.5,389.0 576.5,393.7 577.5,392.3 577.5,385.4 578.5,383.3 578.5,397.6 579.5,386.4 579.5,372.0 580.5,386.1 580.5,392.7 581.5,394.8 581.5,386.4 582.5,384.2 582.5,392.7 583.5,389.6 583.5,382.8 584.5,386.7 584.5,398.1 585.5,392.0 585.5,383.3 586.5,385.2 586.5,397.7 587.5,396.6 587.5,386.8 588.5,388.9 588.5,393.9 589.5,390.8 589.5,384.6 590.5,386.2 590.5,391.4" fill="none" stroke="#1cbce4" stroke-width="1.35" stroke-linejoin="bevel"/>
<polyline points="35.5,457.8 35.5,461.9 36.5,463.7 36.5,458.1 37.5,457.7 37.5,463.0 38.5,461.4 38.5,453.8 39.5,454.4 39.5,459.4 40.5,460.8 40.5,455.8 41.5,455.4 41.5,459.5 42.5,462.6 42.5,453.0 43.5,456.2 43.5,461.0 44.5,461.6 44.5,458.0 45.5,455.7 45.5,460.8 46.5,461.8 46.5,455.0 47.5,459.4 47.5,462.9 48.5,465.3 48.5,459.3 49.5,457.8 49.5,462.8 50.5,463.7 50.5,456.1 51.5,446.2 51.5,462.3 52.5,460.5 52.5,455.3 53.5,456.2 53.5,462.0 54.5,466.4 54.5,457.3 55.5,457.4 55.5,464.1 56.5,466.7 56.5,460.3 57.5,458.5 57.5,462.9 58.5,462.6 58.5,457.8 59.5,455.7 59.5,462.3 60.5,464.8 60.5,461.3 61.5,460.2 61.5,464.1 62.5,465.3 62.5,459.3 63.5,456.6 63.5,460.9 64.5,463.5 64.5,454.2 65.5,451.0 65.5,461.8 66.5,463.8 66.5,458.8 67.5,459.9 67.5,468.9 68.5,464.5 68.5,457.9 69.5,459.5 69.5,467.9 70.5,465.5 70.5,460.8 71.5,459.4 71.5,463.9 72.5,462.1 72.5,455.0 73.5,456.9 73.5,462.6 74.5,464.1 74.5,459.4 75.5,458.5 75.5,464.5 76.5,462.7 76.5,457.5 77.5,449.0 77.5,457.8 78.5,460.1 78.5,450.7 79.5,453.3 79.5,457.3 80.5,461.4 80.5,456.2 81.5,456.1 81.5,461.3 82.5,463.4 82.5,459.2 83.5,458.6 83.5,463.6 84.5,463.9 84.5,459.2 85.5,455.5 85.5,461.0 86.5,459.6 86.5,454.4 87.5,449.2 87.5,455.2 88.5,458.3 88.5,452.4 89.5,451.9 89.5,461.2 90.5,461.1 90.5,456.2 91.5,456.6 91.5,462.8 92.5,462.9 92.5,458.4 93.5,456.5 93.5,461.4 94.5,461.5 94.5,450.3 95.5,456.0 95.5,460.0 96.5,462.1 96.5,456.0 97.5,453.7 97.5,458.6 98.5,462.6 98.5,458.3 99.5,456.5 99.5,462.1 100.5,462.7 100.5,456.7 101.5,455.3 101.5,459.6 102.5,460.9 102.5,455.8 103.5,455.4 103.5,461.3 104.5,464.2 104.5,456.4 105.5,458.5 105.5,463.2 106.5,461.6 106.5,458.2 107.5,455.9 107.5,460.2 108.5,460.1 108.5,456.9 109.5,451.9 109.5,459.8 110.5,460.0 110.5,453.1 111.5,453.7 111.5,459.1 112.5,460.7 112.5,453.8 113.5,452.0 113.5,462.1 114.5,460.7 114.5,456.5 115.5,453.7 115.5,459.3 116.5,459.3 116.5,455.5 117.5,454.5 117.5,460.1 118.5,460.9 118.5,456.2 119.5,456.8 119.5,460.4 120.5,464.2 120.5,455.6 121.5,452.3 121.5,458.4 122.5,459.2 122.5,452.6 123.5,457.3 123.5,461.2 124.5,461.9 124.5,458.5 125.5,455.6 125.5,460.9 126.5,461.4 126.5,455.5 127.5,457.2 127.5,461.8 128.5,466.8 128.5,458.6 129.5,462.9 129.5,475.6 130.5,469.5 130.5,465.7 131.5,463.0 131.5,472.1 132.5,465.0 132.5,461.4 133.5,462.1 133.5,466.5 134.5,466.0 134.5,461.5 135.5,464.0 135.5,472.7 136.5,468.1 136.5,463.6 137.5,461.2 137.5,466.9 138.5,466.0 138.5,459.2 139.5,463.8 139.5,467.8 140.5,468.2 140.5,463.8 141.5,462.5 141.5,466.5 142.5,463.0 142.5,459.4 143.5,455.9 143.5,467.4 144.5,461.4 144.5,457.4 145.5,460.3 145.5,464.6 146.5,463.9 146.5,459.7 147.5,458.9 147.5,463.4 148.5,462.8 148.5,457.8 149.5,458.2 149.5,462.9 150.5,465.8 150.5,459.5 151.5,461.4 151.5,466.9 152.5,464.8 152.5,460.5 153.5,460.5 153.5,468.8 154.5,465.2 154.5,459.3 155.5,462.3 155.5,465.9 156.5,466.3 156.5,460.8 157.5,460.5 157.5,467.7 158.5,467.4 158.5,461.4 159.5,460.5 159.5,467.5 160.5,470.1 160.5,462.1 161.5,459.4 161.5,466.9 162.5,467.2 162.5,459.5 163.5,459.4 163.5,463.9 164.5,465.4 164.5,460.9 165.5,462.2 165.5,468.7 166.5,476.2 166.5,464.9 167.5,466.5 167.5,469.6 168.5,467.1 168.5,462.9 169.5,455.7 169.5,464.3 170.5,462.3 170.5,458.4 171.5,460.2 171.5,465.2 172.5,463.9 172.5,457.6 173.5,456.9 173.5,462.4 174.5,463.1 174.5,455.7 175.5,457.4 175.5,462.3 176.5,463.2 176.5,453.5 177.5,457.9 177.5,463.0 178.5,462.3 178.5,457.8 179.5,458.7 179.5,466.8 180.5,461.1 180.5,456.9 181.5,458.2 181.5,464.2 182.5,464.1 182.5,455.2 183.5,458.5 183.5,462.0 184.5,463.3 184.5,456.2 185.5,459.6 185.5,465.1 186.5,467.9 186.5,463.0 187.5,464.7 187.5,469.1 188.5,467.7 188.5,462.4 189.5,462.2 189.5,468.5 190.5,467.2 190.5,462.4 191.5,463.9 191.5,467.4 192.5,468.5 192.5,463.9 193.5,461.9 193.5,466.1 194.5,468.4 194.5,462.0 195.5,460.5 195.5,465.4 196.5,466.8 196.5,463.0 197.5,462.3 197.5,466.4 198.5,470.5 198.5,464.9 199.5,460.2 199.5,467.7 200.5,467.6 200.5,460.9 201.5,462.5 201.5,471.8 202.5,468.4 202.5,463.6 203.5,466.0 203.5,470.1 204.5,469.3 204.5,461.3 205.5,466.8 205.5,471.6 206.5,469.1 206.5,465.1 207.5,466.1 207.5,470.9 208.5,470.6 208.5,462.5 209.5,467.2 209.5,471.5 210.5,471.9 210.5,463.5 211.5,465.7 211.5,473.3 212.5,470.6 212.5,463.0 213.5,466.2 213.5,469.8 214.5,470.2 214.5,465.7 215.5,464.7 215.5,469.1 216.5,469.3 216.5,463.1 217.5,465.3 217.5,471.3 218.5,470.9 218.5,466.2 219.5,465.0 219.5,470.7 220.5,471.2 220.5,464.5 221.5,463.3 221.5,468.0 222.5,469.3 222.5,464.9 223.5,463.9 223.5,469.4 224.5,470.2 224.5,465.2 225.5,462.5 225.5,467.4 226.5,467.0 226.5,458.2 227.5,458.7 227.5,467.2 228.5,466.5 228.5,461.2 229.5,462.4 229.5,467.4 230.5,466.4 230.5,458.1 231.5,458.7 231.5,463.9 232.5,466.8 232.5,456.3 233.5,463.2 233.5,467.6 234.5,468.5 234.5,458.9 235.5,463.0 235.5,468.7 236.5,470.0 236.5,463.9 237.5,464.7 237.5,469.2 238.5,470.8 238.5,465.6 239.5,465.3 239.5,469.9 240.5,471.1 240.5,464.8 241.5,462.9 241.5,467.3 242.5,470.4 242.5,463.2 243.5,463.2 243.5,466.8 244.5,467.5 244.5,459.7 245.5,460.9 245.5,464.4 246.5,465.2 246.5,459.0 247.5,458.2 247.5,465.2 248.5,466.4 248.5,461.7 249.5,465.3 249.5,470.4 250.5,472.2 250.5,465.0 251.5,466.7 251.5,470.7 252.5,471.1 252.5,465.3 253.5,468.5 253.5,473.5 254.5,472.6 254.5,466.6 255.5,467.3 255.5,473.4 256.5,470.1 256.5,466.0 257.5,466.4 257.5,470.6 258.5,473.4 258.5,464.3 259.5,464.7 259.5,468.6 260.5,471.1 260.5,465.6 261.5,465.8 261.5,473.9 262.5,471.6 262.5,466.7 263.5,468.0 263.5,473.1 264.5,476.2 264.5,471.3 265.5,471.2 265.5,476.1 266.5,473.8 266.5,467.7 267.5,468.8 267.5,473.6 268.5,478.3 268.5,467.1 269.5,468.5 269.5,472.7 270.5,471.4 270.5,466.9 271.5,465.6 271.5,470.7 272.5,469.3 272.5,463.6 273.5,463.0 273.5,470.0 274.5,471.2 274.5,465.8 275.5,466.0 275.5,476.6 276.5,471.0 276.5,466.5 277.5,467.5 277.5,471.5 278.5,474.4 278.5,469.6 279.5,466.3 279.5,473.3 280.5,474.0 280.5,467.4 281.5,464.3 281.5,470.8 282.5,478.3 282.5,470.2 283.5,470.0 283.5,477.5 284.5,475.5 284.5,470.3 285.5,468.9 285.5,474.2 286.5,475.8 286.5,471.3 287.5,470.5 287.5,474.4 288.5,479.1 288.5,470.0 289.5,467.9 289.5,471.1 290.5,475.8 290.5,471.0 291.5,469.0 291.5,474.7 292.5,475.9 292.5,471.6 293.5,469.1 293.5,473.3 294.5,476.5 294.5,470.5 295.5,469.9 295.5,476.1 296.5,475.1 296.5,465.3 297.5,468.2 297.5,473.9 298.5,473.5 298.5,468.8 299.5,468.9 299.5,474.0 300.5,475.2 300.5,470.4 301.5,474.2 301.5,479.0 302.5,477.9 302.5,473.5 303.5,471.0 303.5,475.7 304.5,481.9 304.5,471.6 305.5,470.5 305.5,477.1 306.5,476.9 306.5,471.5 307.5,469.9 307.5,475.2 308.5,474.1 308.5,462.7 309.5,468.7 309.5,476.0 310.5,473.9 310.5,469.7 311.5,469.9 311.5,476.1 312.5,475.0 312.5,469.6 313.5,462.8 313.5,474.7 314.5,478.5 314.5,471.6 315.5,472.0 315.5,476.6 316.5,477.2 316.5,473.5 317.5,473.7 317.5,478.3 318.5,478.6 318.5,471.6 319.5,468.5 319.5,475.5 320.5,476.6 320.5,472.2 321.5,472.7 321.5,479.5 322.5,477.1 322.5,469.0 323.5,469.2 323.5,474.6 324.5,479.1 324.5,473.7 325.5,469.2 325.5,475.3 326.5,475.6 326.5,471.1 327.5,468.0 327.5,474.1 328.5,474.5 328.5,470.9 329.5,472.2 329.5,475.5 330.5,477.7 330.5,472.0 331.5,471.8 331.5,477.6 332.5,475.0 332.5,471.2 333.5,472.3 333.5,476.1 334.5,479.6 334.5,470.2 335.5,472.0 335.5,476.8 336.5,475.1 336.5,467.1 337.5,467.2 337.5,472.3 338.5,477.3 338.5,468.4 339.5,473.5 339.5,477.5 340.5,485.1 340.5,472.0 341.5,474.9 341.5,479.8 342.5,479.8 342.5,475.4 343.5,474.1 343.5,478.5 344.5,477.2 344.5,473.0 345.5,470.8 345.5,475.2 346.5,477.8 346.5,472.6 347.5,473.3 347.5,485.7 348.5,478.5 348.5,471.7 349.5,475.9 349.5,479.5 350.5,482.2 350.5,475.3 351.5,473.5 351.5,478.4 352.5,475.3 352.5,471.4 353.5,469.2 353.5,474.1 354.5,473.8 354.5,468.9 355.5,471.7 355.5,476.6 356.5,476.2 356.5,469.2 357.5,471.5 357.5,475.2 358.5,476.6 358.5,472.0 359.5,471.6 359.5,477.7 360.5,475.8 360.5,470.8 361.5,469.8 361.5,475.6 362.5,475.9 362.5,470.4 363.5,473.6 363.5,477.0 364.5,479.5 364.5,474.5 365.5,472.1 365.5,480.1 366.5,475.4 366.5,470.9 367.5,468.9 367.5,474.1 368.5,476.0 368.5,465.5 369.5,472.1 369.5,476.9 370.5,479.8 370.5,471.0 371.5,470.7 371.5,481.3 372.5,479.9 372.5,476.0 373.5,476.5 373.5,481.5 374.5,483.4 374.5,479.2 375.5,472.4 375.5,481.0 376.5,481.8 376.5,474.5 377.5,473.8 377.5,480.3 378.5,480.3 378.5,475.4 379.5,474.6 379.5,481.3 380.5,479.2 380.5,474.4 381.5,475.8 381.5,483.0 382.5,480.5 382.5,475.7 383.5,474.1 383.5,478.6 384.5,479.6 384.5,475.6 385.5,475.6 385.5,480.1 386.5,481.9 386.5,476.7 387.5,476.7 387.5,484.2 388.5,483.1 388.5,478.3 389.5,478.1 389.5,484.5 390.5,481.8 390.5,476.1 391.5,475.7 391.5,479.2 392.5,481.7 392.5,474.8 393.5,475.0 393.5,480.4 394.5,483.8 394.5,478.1 395.5,479.2 395.5,484.2 396.5,484.1 396.5,479.0 397.5,478.4 397.5,485.6 398.5,485.5 398.5,481.5 399.5,482.4 399.5,492.2 400.5,486.8 400.5,474.8 401.5,477.8 401.5,483.1 402.5,485.0 402.5,479.0 403.5,481.2 403.5,486.2 404.5,486.4 404.5,480.8 405.5,479.3 405.5,483.7 406.5,483.5 406.5,476.5" fill="none" stroke="#60a4fa" stroke-width="1.35" stroke-linejoin="bevel"/>
<polyline points="412.5,467.5 412.5,476.2 413.5,474.4 413.5,467.6 414.5,466.0 414.5,472.2 415.5,474.9 415.5,466.7 416.5,464.9 416.5,470.6 417.5,467.2 417.5,462.2 418.5,462.3 418.5,466.3 419.5,466.4 419.5,461.7 420.5,460.2 420.5,468.2 421.5,463.1 421.5,459.4 422.5,452.1 422.5,462.3 423.5,463.1 423.5,457.1 424.5,461.3 424.5,466.2 425.5,469.6 425.5,464.9 426.5,463.3 426.5,471.7 427.5,468.9 427.5,461.5 428.5,456.6 428.5,465.1 429.5,467.7 429.5,460.1 430.5,459.0 430.5,465.2 431.5,467.1 431.5,460.8 432.5,462.0 432.5,468.8 433.5,467.0 433.5,463.3 434.5,460.7 434.5,471.7 435.5,466.5 435.5,461.7 436.5,460.7 436.5,468.6 437.5,466.6 437.5,461.7 438.5,458.7 438.5,466.6 439.5,462.2 439.5,456.6 440.5,455.2 440.5,463.6 441.5,462.7 441.5,457.5 442.5,459.7 442.5,465.1 443.5,463.6 443.5,457.6 444.5,461.0 444.5,469.8 445.5,464.9 445.5,459.0 446.5,459.4 446.5,465.0 447.5,465.5 447.5,457.9 448.5,459.7 448.5,465.1 449.5,466.6 449.5,460.6 450.5,461.8 450.5,466.6 451.5,467.1 451.5,460.9 452.5,460.0 452.5,465.3 453.5,466.2 453.5,459.3 454.5,461.7 454.5,466.2 455.5,469.0 455.5,462.7 456.5,464.5 456.5,470.2 457.5,467.4 457.5,463.3 458.5,464.2 458.5,468.9 459.5,473.3 459.5,465.6 460.5,466.1 460.5,470.9 461.5,467.4 461.5,461.3 462.5,460.0 462.5,465.8 463.5,472.5 463.5,464.5 464.5,466.1 464.5,472.3 465.5,469.3 465.5,464.8 466.5,464.6 466.5,469.1 467.5,471.2 467.5,463.9 468.5,466.7 468.5,471.6 469.5,470.2 469.5,465.5 470.5,463.0 470.5,467.0 471.5,468.2 471.5,461.5 472.5,462.5 472.5,472.3 473.5,467.9 473.5,463.3 474.5,459.0 474.5,464.4 475.5,463.7 475.5,457.8 476.5,460.0 476.5,466.6 477.5,464.5 477.5,458.9 478.5,460.6 478.5,465.5 479.5,467.0 479.5,461.0 480.5,463.0 480.5,467.2 481.5,467.9 481.5,461.5 482.5,460.7 482.5,466.0 483.5,468.5 483.5,462.2 484.5,463.9 484.5,468.5 485.5,472.5 485.5,465.3 486.5,465.5 486.5,470.2 487.5,471.7 487.5,463.7 488.5,464.0 488.5,469.2 489.5,473.7 489.5,465.5 490.5,462.8 490.5,472.9 491.5,471.5 491.5,466.2 492.5,465.1 492.5,470.2 493.5,467.7 493.5,464.0 494.5,458.7 494.5,464.3 495.5,467.1 495.5,458.7 496.5,457.4 496.5,465.1 497.5,467.7 497.5,460.6 498.5,454.2 498.5,462.7 499.5,463.8 499.5,458.4 500.5,454.1 500.5,460.7 501.5,463.9 501.5,459.0 502.5,458.7 502.5,464.3 503.5,466.8 503.5,462.0 504.5,461.8 504.5,467.7 505.5,469.2 505.5,461.4 506.5,462.3 506.5,472.2 507.5,468.8 507.5,458.5 508.5,460.7 508.5,466.9 509.5,466.4 509.5,461.6 510.5,464.1 510.5,468.7 511.5,468.8 511.5,462.9 512.5,462.2 512.5,468.4 513.5,466.5 513.5,455.6 514.5,460.9 514.5,465.7 515.5,469.1 515.5,463.1 516.5,457.8 516.5,469.8 517.5,470.3 517.5,465.0 518.5,464.9 518.5,471.2 519.5,470.1 519.5,465.0 520.5,462.6 520.5,467.8 521.5,474.3 521.5,459.8 522.5,458.9 522.5,464.5 523.5,464.9 523.5,458.6 524.5,459.1 524.5,466.6 525.5,465.8 525.5,457.8 526.5,460.5 526.5,468.8 527.5,464.1 527.5,459.8 528.5,459.9 528.5,466.7 529.5,465.4 529.5,459.9 530.5,457.0 530.5,466.3 531.5,462.9 531.5,455.7 532.5,459.6 532.5,464.1 533.5,465.8 533.5,459.1 534.5,452.4 534.5,463.8 535.5,463.5 535.5,457.9 536.5,456.8 536.5,462.1 537.5,463.4 537.5,458.0 538.5,460.9 538.5,467.4 539.5,464.6 539.5,459.9 540.5,460.2 540.5,466.9 541.5,464.7 541.5,459.9 542.5,461.0 542.5,466.2 543.5,467.3 543.5,460.7 544.5,461.9 544.5,467.6 545.5,466.7 545.5,461.8 546.5,460.3 546.5,465.9 547.5,465.8 547.5,461.4 548.5,455.7 548.5,465.5 549.5,464.4 549.5,456.5 550.5,458.3 550.5,463.0 551.5,461.7 551.5,457.2 552.5,459.1 552.5,463.7 553.5,461.7 553.5,455.9 554.5,458.2 554.5,463.6 555.5,461.7 555.5,455.9 556.5,456.5 556.5,461.5 557.5,461.2 557.5,456.0 558.5,454.9 558.5,462.8 559.5,462.8 559.5,458.3 560.5,457.1 560.5,462.8 561.5,461.4 561.5,455.1 562.5,458.6 562.5,462.5 563.5,462.4 563.5,455.2 564.5,454.2 564.5,463.3 565.5,462.6 565.5,457.3 566.5,458.9 566.5,466.0 567.5,466.6 567.5,460.2 568.5,459.3 568.5,464.4 569.5,464.1 569.5,455.5 570.5,457.1 570.5,463.1 571.5,465.3 571.5,458.2 572.5,459.6 572.5,464.3 573.5,463.1 573.5,458.1 574.5,454.7 574.5,460.4 575.5,457.4 575.5,452.1 576.5,453.9 576.5,459.5 577.5,464.4 577.5,454.8 578.5,460.1 578.5,465.4 579.5,463.4 579.5,457.6 580.5,457.2 580.5,462.2 581.5,461.1 581.5,456.3 582.5,455.0 582.5,463.4 583.5,458.7 583.5,454.8 584.5,450.4 584.5,458.4 585.5,458.8 585.5,453.1 586.5,454.4 586.5,459.4 587.5,462.2 587.5,456.3 588.5,457.9 588.5,461.9 589.5,473.9 589.5,461.6 590.5,464.7 590.5,470.8" fill="none" stroke="#60a4fa" stroke-width="1.35" stroke-linejoin="bevel"/>
<polyline points="35.5,523.6 35.5,531.4 36.5,533.7 36.5,526.2 37.5,530.7 37.5,535.2 38.5,536.3 38.5,529.8 39.5,528.9 39.5,538.3 40.5,545.1 40.5,532.8 41.5,531.1 41.5,537.6 42.5,540.9 42.5,527.1 43.5,532.2 43.5,539.0 44.5,540.3 44.5,535.1 45.5,532.7 45.5,537.4 46.5,540.5 46.5,530.4 47.5,532.4 47.5,540.5 48.5,537.2 48.5,530.8 49.5,531.8 49.5,537.6 50.5,539.9 50.5,530.7 51.5,531.2 51.5,547.7 52.5,538.2 52.5,526.7 53.5,528.2 53.5,536.9 54.5,537.2 54.5,530.6 55.5,535.8 55.5,542.0 56.5,540.6 56.5,533.5 57.5,533.0 57.5,538.0 58.5,539.4 58.5,533.8 59.5,531.1 59.5,537.4 60.5,539.9 60.5,529.9 61.5,535.0 61.5,540.2 62.5,541.4 62.5,529.3 63.5,529.4 63.5,538.3 64.5,547.4 64.5,532.2 65.5,533.2 65.5,540.5 66.5,540.4 66.5,528.9 67.5,530.7 67.5,545.9 68.5,546.1 68.5,533.2 69.5,534.3 69.5,540.3 70.5,538.2 70.5,532.4 71.5,520.6 71.5,536.6 72.5,536.7 72.5,525.4 73.5,530.5 73.5,538.3 74.5,543.7 74.5,532.6 75.5,532.8 75.5,538.6 76.5,539.6 76.5,529.2 77.5,529.3 77.5,538.2 78.5,536.1 78.5,528.7 79.5,530.0 79.5,538.5 80.5,538.8 80.5,516.3 81.5,531.6 81.5,540.4 82.5,536.9 82.5,531.0 83.5,525.9 83.5,536.9 84.5,536.8 84.5,526.8 85.5,530.9 85.5,540.7 86.5,537.9 86.5,530.7 87.5,529.8 87.5,534.6 88.5,536.6 88.5,528.9 89.5,528.4 89.5,537.6 90.5,534.9 90.5,529.5 91.5,530.0 91.5,535.8 92.5,535.8 92.5,531.1 93.5,529.7 93.5,548.5 94.5,540.4 94.5,532.2 95.5,529.1 95.5,536.8 96.5,537.2 96.5,529.8 97.5,526.2 97.5,538.5 98.5,532.2 98.5,525.2 99.5,530.7 99.5,538.0 100.5,537.4 100.5,527.6 101.5,529.0 101.5,537.0 102.5,538.0 102.5,530.7 103.5,528.5 103.5,535.6 104.5,538.1 104.5,529.0 105.5,533.1 105.5,537.7 106.5,538.8 106.5,529.9 107.5,532.3 107.5,540.1 108.5,539.9 108.5,531.6 109.5,531.6 109.5,539.1 110.5,536.8 110.5,530.3 111.5,529.5 111.5,538.8 112.5,537.7 112.5,526.3 113.5,528.4 113.5,537.2 114.5,538.6 114.5,524.3 115.5,531.5 115.5,545.2 116.5,536.5 116.5,529.0 117.5,530.9 117.5,536.8 118.5,536.5 118.5,527.7 119.5,531.7 119.5,540.6 120.5,538.9 120.5,531.2 121.5,533.2 121.5,539.8 122.5,539.0 122.5,532.9 123.5,531.4 123.5,537.3 124.5,534.7 124.5,529.1 125.5,530.0 125.5,535.1 126.5,534.5 126.5,527.7 127.5,528.3 127.5,535.6 128.5,540.0 128.5,533.2 129.5,525.9 129.5,541.6 130.5,537.7 130.5,530.4 131.5,531.0 131.5,536.8 132.5,537.2 132.5,532.7 133.5,530.8 133.5,535.3 134.5,534.3 134.5,526.9 135.5,530.2 135.5,537.1 136.5,539.8 136.5,532.2 137.5,533.1 137.5,538.3 138.5,536.5 138.5,530.6 139.5,534.2 139.5,540.7 140.5,549.1 140.5,534.3 141.5,534.9 141.5,539.3 142.5,538.5 142.5,533.6 143.5,529.6 143.5,538.9 144.5,541.5 144.5,536.0 145.5,540.3 145.5,545.5 146.5,544.9 146.5,534.9 147.5,532.3 147.5,539.5 148.5,536.7 148.5,530.4 149.5,531.6 149.5,536.7 150.5,538.8 150.5,532.9 151.5,530.1 151.5,544.6 152.5,546.0 152.5,534.7 153.5,531.8 153.5,540.5 154.5,547.7 154.5,530.6 155.5,533.7 155.5,540.7 156.5,546.3 156.5,533.7 157.5,529.8 157.5,538.0 158.5,537.8 158.5,523.4 159.5,531.1 159.5,537.0 160.5,537.4 160.5,523.6 161.5,533.9 161.5,544.9 162.5,541.8 162.5,536.7 163.5,534.8 163.5,540.7 164.5,543.7 164.5,534.3 165.5,538.1 165.5,543.7 166.5,542.5 166.5,537.2 167.5,530.7 167.5,542.5 168.5,541.0 168.5,534.3 169.5,535.2 169.5,549.0 170.5,538.2 170.5,534.1 171.5,532.9 171.5,544.7 172.5,539.0 172.5,533.4 173.5,530.3 173.5,538.7 174.5,549.8 174.5,536.0 175.5,535.2 175.5,543.2 176.5,541.9 176.5,534.6 177.5,533.3 177.5,546.5 178.5,542.7 178.5,534.2 179.5,533.8 179.5,541.3 180.5,542.2 180.5,528.6 181.5,532.7 181.5,541.0 182.5,541.5 182.5,534.4 183.5,536.2 183.5,545.6 184.5,543.0 184.5,536.7 185.5,530.3 185.5,539.2 186.5,540.3 186.5,533.0 187.5,536.2 187.5,543.4 188.5,549.7 188.5,533.9 189.5,527.5 189.5,542.2 190.5,542.6 190.5,534.6 191.5,535.2 191.5,539.8 192.5,548.0 192.5,539.4 193.5,532.5 193.5,546.8 194.5,546.9 194.5,539.1 195.5,536.0 195.5,543.4 196.5,541.9 196.5,536.3 197.5,526.1 197.5,542.5 198.5,541.7 198.5,533.0 199.5,531.1 199.5,542.3 200.5,543.0 200.5,538.1 201.5,537.4 201.5,549.3 202.5,543.2 202.5,530.1 203.5,530.1 203.5,546.5 204.5,545.7 204.5,541.3 205.5,536.8 205.5,550.0 206.5,543.8 206.5,535.1 207.5,537.5 207.5,546.2 208.5,544.0 208.5,536.7 209.5,536.5 209.5,552.3 210.5,547.6 210.5,529.7 211.5,537.2 211.5,544.9 212.5,546.5 212.5,533.1 213.5,531.9 213.5,543.8 214.5,542.2 214.5,536.6 215.5,534.9 215.5,540.7 216.5,541.9 216.5,536.1 217.5,535.9 217.5,544.7 218.5,543.1 218.5,536.3 219.5,536.5 219.5,540.8 220.5,542.4 220.5,536.6 221.5,535.9 221.5,541.5 222.5,544.6 222.5,530.2 223.5,535.6 223.5,544.4 224.5,548.5 224.5,530.4 225.5,530.8 225.5,538.7 226.5,541.3 226.5,535.2 227.5,536.9 227.5,549.9 228.5,542.3 228.5,523.9 229.5,533.1 229.5,538.6 230.5,541.6 230.5,535.9 231.5,538.5 231.5,546.6 232.5,541.0 232.5,535.2 233.5,533.1 233.5,537.6 234.5,539.7 234.5,533.4 235.5,535.0 235.5,545.0 236.5,541.6 236.5,528.9 237.5,534.7 237.5,542.6 238.5,543.9 238.5,534.4 239.5,533.5 239.5,539.4 240.5,539.5 240.5,533.0 241.5,533.2 241.5,546.7 242.5,543.6 242.5,535.8 243.5,533.9 243.5,541.3 244.5,539.2 244.5,533.4 245.5,531.5 245.5,549.9 246.5,547.3 246.5,533.6 247.5,534.9 247.5,541.6 248.5,546.9 248.5,534.4 249.5,532.9 249.5,546.8 250.5,544.9 250.5,535.4 251.5,538.5 251.5,545.1 252.5,552.0 252.5,541.2 253.5,538.6 253.5,546.7 254.5,545.7 254.5,537.1 255.5,534.5 255.5,546.5 256.5,542.6 256.5,536.0 257.5,530.9 257.5,544.1 258.5,543.8 258.5,535.2 259.5,536.4 259.5,543.9 260.5,545.9 260.5,541.3 261.5,537.2 261.5,550.1 262.5,545.1 262.5,538.8 263.5,542.4 263.5,553.1 264.5,548.4 264.5,542.0 265.5,541.1 265.5,546.0 266.5,547.8 266.5,541.1 267.5,537.9 267.5,546.8 268.5,552.0 268.5,538.3 269.5,538.4 269.5,548.1 270.5,549.6 270.5,543.8 271.5,540.7 271.5,550.3 272.5,544.6 272.5,539.4 273.5,540.3 273.5,546.6 274.5,547.6 274.5,537.9 275.5,538.8 275.5,546.6 276.5,553.2 276.5,538.7 277.5,536.9 277.5,547.7 278.5,546.3 278.5,540.1 279.5,539.2 279.5,544.1 280.5,546.5 280.5,537.1 281.5,541.3 281.5,547.7 282.5,550.3 282.5,539.7 283.5,539.8 283.5,550.2 284.5,557.3 284.5,540.9 285.5,540.1 285.5,546.8 286.5,549.3 286.5,541.7 287.5,541.0 287.5,546.5 288.5,553.1 288.5,536.7 289.5,536.9 289.5,547.0 290.5,546.1 290.5,540.2 291.5,540.6 291.5,547.9 292.5,545.4 292.5,539.0 293.5,540.7 293.5,546.1 294.5,546.0 294.5,537.1 295.5,539.0 295.5,546.8 296.5,554.0 296.5,542.5 297.5,540.3 297.5,552.1 298.5,560.6 298.5,544.7 299.5,546.1 299.5,552.2 300.5,549.5 300.5,544.0 301.5,544.3 301.5,549.4 302.5,550.4 302.5,540.8 303.5,544.6 303.5,558.7 304.5,549.7 304.5,541.7 305.5,542.7 305.5,549.3 306.5,549.2 306.5,540.4 307.5,540.2 307.5,545.1 308.5,548.7 308.5,541.8 309.5,543.7 309.5,548.9 310.5,552.5 310.5,542.7 311.5,541.7 311.5,549.3 312.5,549.4 312.5,542.1 313.5,542.3 313.5,548.3 314.5,551.5 314.5,543.1 315.5,544.3 315.5,554.9 316.5,549.1 316.5,539.8 317.5,543.0 317.5,553.1 318.5,554.3 318.5,545.2 319.5,540.0 319.5,551.4 320.5,550.8 320.5,544.3 321.5,543.1 321.5,547.8 322.5,548.0 322.5,541.7 323.5,540.1 323.5,545.6 324.5,550.0 324.5,541.4 325.5,542.7 325.5,550.6 326.5,546.2 326.5,538.7 327.5,541.7 327.5,548.5 328.5,560.1 328.5,541.7 329.5,541.7 329.5,548.4 330.5,549.2 330.5,543.7 331.5,539.9 331.5,545.4 332.5,547.9 332.5,542.3 333.5,536.4 333.5,551.2 334.5,548.9 334.5,543.0 335.5,540.6 335.5,547.2 336.5,550.6 336.5,540.1 337.5,543.5 337.5,550.3 338.5,549.3 338.5,543.1 339.5,543.9 339.5,551.8 340.5,551.9 340.5,541.2 341.5,541.1 341.5,553.3 342.5,551.8 342.5,544.0 343.5,547.1 343.5,563.1 344.5,550.6 344.5,544.6 345.5,542.9 345.5,550.5 346.5,548.8 346.5,536.0 347.5,543.8 347.5,549.8 348.5,557.0 348.5,545.1 349.5,544.2 349.5,551.0 350.5,552.0 350.5,541.0 351.5,541.8 351.5,549.4 352.5,551.7 352.5,543.4 353.5,541.3 353.5,551.5 354.5,550.2 354.5,544.1 355.5,545.2 355.5,551.0 356.5,551.6 356.5,541.2 357.5,540.6 357.5,549.8 358.5,548.1 358.5,540.7 359.5,541.2 359.5,561.9 360.5,549.9 360.5,544.8 361.5,540.0 361.5,550.3 362.5,549.6 362.5,541.8 363.5,544.0 363.5,550.7 364.5,553.4 364.5,543.3 365.5,545.1 365.5,550.7 366.5,553.5 366.5,546.2 367.5,542.1 367.5,552.1 368.5,551.9 368.5,545.8 369.5,544.4 369.5,559.7 370.5,547.7 370.5,542.1 371.5,542.2 371.5,549.8 372.5,548.2 372.5,541.9 373.5,541.9 373.5,548.0 374.5,550.2 374.5,542.7 375.5,544.0 375.5,549.2 376.5,550.7 376.5,543.8 377.5,544.1 377.5,552.4 378.5,555.5 378.5,546.6 379.5,546.7 379.5,552.9 380.5,558.3 380.5,545.5 381.5,545.7 381.5,553.6 382.5,553.0 382.5,535.9 383.5,545.2 383.5,551.3 384.5,553.8 384.5,546.7 385.5,541.6 385.5,556.4 386.5,550.4 386.5,544.6 387.5,534.6 387.5,550.7 388.5,550.8 388.5,546.2 389.5,545.7 389.5,553.6 390.5,564.6 390.5,549.0 391.5,546.8 391.5,552.2 392.5,549.1 392.5,544.2 393.5,545.1 393.5,553.7 394.5,553.1 394.5,545.7 395.5,542.2 395.5,550.5 396.5,552.9 396.5,536.8 397.5,547.7 397.5,553.8 398.5,551.8 398.5,547.2 399.5,533.5 399.5,549.6 400.5,551.0 400.5,544.2 401.5,545.4 401.5,560.1 402.5,555.2 402.5,544.6 403.5,545.9 403.5,550.6 404.5,547.8 404.5,535.6 405.5,542.4 405.5,555.7 406.5,547.5 406.5,541.3" fill="none" stroke="#f082fa" stroke-width="1.35" stroke-linejoin="bevel"/>
<polyline points="412.5,534.3 412.5,539.4 413.5,541.2 413.5,532.6 414.5,529.1 414.5,544.0 415.5,548.3 415.5,537.8 416.5,540.2 416.5,551.8 417.5,546.1 417.5,539.5 418.5,538.3 418.5,546.1 419.5,545.7 419.5,534.8 420.5,536.2 420.5,545.7 421.5,546.7 421.5,538.3 422.5,537.7 422.5,547.1 423.5,546.4 423.5,539.4 424.5,536.4 424.5,546.2 425.5,547.3 425.5,536.6 426.5,538.2 426.5,546.7 427.5,543.8 427.5,537.7 428.5,536.5 428.5,545.1 429.5,543.4 429.5,537.7 430.5,537.7 430.5,544.1 431.5,549.0 431.5,532.4 432.5,530.6 432.5,541.1 433.5,541.7 433.5,536.0 434.5,531.4 434.5,543.9 435.5,541.7 435.5,535.0 436.5,535.2 436.5,541.0 437.5,541.4 437.5,535.1 438.5,536.6 438.5,541.8 439.5,544.6 439.5,535.2 440.5,538.2 440.5,551.4 441.5,545.0 441.5,538.5 442.5,538.6 442.5,549.4 443.5,549.0 443.5,541.3 444.5,539.6 444.5,551.5 445.5,545.0 445.5,535.5 446.5,538.2 446.5,546.3 447.5,546.8 447.5,540.6 448.5,535.1 448.5,545.6 449.5,545.5 449.5,534.7 450.5,536.1 450.5,546.6 451.5,546.1 451.5,535.4 452.5,539.3 452.5,546.4 453.5,548.5 453.5,542.2 454.5,540.6 454.5,557.0 455.5,550.3 455.5,541.8 456.5,540.2 456.5,547.1 457.5,547.0 457.5,539.7 458.5,541.1 458.5,554.9 459.5,547.8 459.5,540.7 460.5,537.7 460.5,543.0 461.5,540.7 461.5,531.1 462.5,534.8 462.5,544.3 463.5,541.8 463.5,534.4 464.5,529.4 464.5,539.9 465.5,545.9 465.5,537.3 466.5,537.3 466.5,547.3 467.5,546.8 467.5,539.9 468.5,540.4 468.5,546.1 469.5,545.3 469.5,539.2 470.5,538.7 470.5,544.8 471.5,545.6 471.5,540.0 472.5,533.7 472.5,544.1 473.5,540.1 473.5,531.8 474.5,535.9 474.5,542.7 475.5,545.7 475.5,539.7 476.5,542.2 476.5,554.5 477.5,548.0 477.5,541.1 478.5,539.2 478.5,549.3 479.5,546.5 479.5,538.5 480.5,535.9 480.5,542.3 481.5,542.3 481.5,532.7 482.5,537.0 482.5,545.2 483.5,545.3 483.5,537.7 484.5,537.3 484.5,550.4 485.5,546.5 485.5,541.3 486.5,535.7 486.5,549.2 487.5,548.4 487.5,538.2 488.5,538.8 488.5,544.5 489.5,545.8 489.5,539.5 490.5,537.6 490.5,549.4 491.5,545.3 491.5,532.9 492.5,536.3 492.5,544.0 493.5,546.0 493.5,538.0 494.5,537.3 494.5,545.4 495.5,545.1 495.5,532.1 496.5,533.5 496.5,544.1 497.5,541.7 497.5,531.5 498.5,535.6 498.5,543.0 499.5,551.8 499.5,538.2 500.5,536.1 500.5,548.0 501.5,540.2 501.5,521.7 502.5,535.7 502.5,548.2 503.5,546.9 503.5,539.7 504.5,541.3 504.5,547.8 505.5,547.1 505.5,536.4 506.5,538.6 506.5,544.6 507.5,543.0 507.5,528.9 508.5,536.0 508.5,540.9 509.5,542.6 509.5,536.4 510.5,535.1 510.5,544.6 511.5,544.4 511.5,536.6 512.5,537.0 512.5,542.8 513.5,550.5 513.5,535.0 514.5,527.9 514.5,540.4 515.5,545.4 515.5,536.1 516.5,529.7 516.5,544.1 517.5,545.9 517.5,534.8 518.5,539.2 518.5,545.6 519.5,547.5 519.5,539.1 520.5,539.2 520.5,545.8 521.5,542.2 521.5,534.2 522.5,534.5 522.5,541.1 523.5,544.2 523.5,532.7 524.5,534.9 524.5,544.8 525.5,544.8 525.5,535.5 526.5,532.6 526.5,544.2 527.5,542.7 527.5,530.4 528.5,531.7 528.5,540.5 529.5,540.2 529.5,532.4 530.5,533.1 530.5,541.4 531.5,541.8 531.5,532.1 532.5,528.7 532.5,540.5 533.5,544.9 533.5,534.5 534.5,531.8 534.5,539.2 535.5,538.4 535.5,529.0 536.5,530.2 536.5,537.4 537.5,539.9 537.5,529.7 538.5,533.3 538.5,540.0 539.5,538.8 539.5,531.6 540.5,530.9 540.5,542.0 541.5,539.3 541.5,532.5 542.5,533.5 542.5,538.6 543.5,542.2 543.5,530.8 544.5,529.3 544.5,544.4 545.5,539.6 545.5,533.1 546.5,526.2 546.5,541.9 547.5,541.6 547.5,532.2 548.5,526.0 548.5,544.2 549.5,549.5 549.5,534.9 550.5,536.7 550.5,542.4 551.5,542.0 551.5,535.6 552.5,530.8 552.5,542.0 553.5,552.2 553.5,535.1 554.5,521.5 554.5,541.9 555.5,541.3 555.5,530.1 556.5,532.0 556.5,543.4 557.5,549.1 557.5,535.9 558.5,532.7 558.5,539.5 559.5,535.2 559.5,527.5 560.5,530.4 560.5,536.6 561.5,540.5 561.5,531.4 562.5,537.6 562.5,545.0 563.5,540.6 563.5,533.1 564.5,533.7 564.5,543.5 565.5,541.0 565.5,533.3 566.5,532.5 566.5,540.0 567.5,541.7 567.5,530.7 568.5,532.1 568.5,538.2 569.5,537.6 569.5,529.6 570.5,527.5 570.5,538.1 571.5,537.8 571.5,531.0 572.5,521.2 572.5,537.8 573.5,538.7 573.5,520.6 574.5,528.6 574.5,538.7 575.5,543.5 575.5,531.5 576.5,532.5 576.5,541.6 577.5,541.7 577.5,530.4 578.5,531.0 578.5,538.1 579.5,539.7 579.5,531.6 580.5,527.2 580.5,542.9 581.5,538.2 581.5,530.2 582.5,520.3 582.5,537.5 583.5,536.2 583.5,529.5 584.5,530.1 584.5,551.7 585.5,538.3 585.5,531.4 586.5,530.9 586.5,542.6 587.5,539.8 587.5,532.6 588.5,522.1 588.5,542.6 589.5,541.5 589.5,529.8 590.5,535.2 590.5,541.4" fill="none" stroke="#f082fa" stroke-width="1.35" stroke-linejoin="bevel"/>
</svg>
<div class="ch" style="top:28.4px">0</div>
<div class="ch" style="top:101.9px">1</div>
<div class="ch" style="top:178.4px">2</div>
<div class="ch" style="top:251.9px">3</div>
<div class="ch" style="top:328.4px">4</div>
<div class="ch" style="top:401.9px">5</div>
<div class="ch" style="top:478.4px">6</div>
<div class="ch" style="top:551.9px">7</div>
 </div>
</div>
</body>
</html>
